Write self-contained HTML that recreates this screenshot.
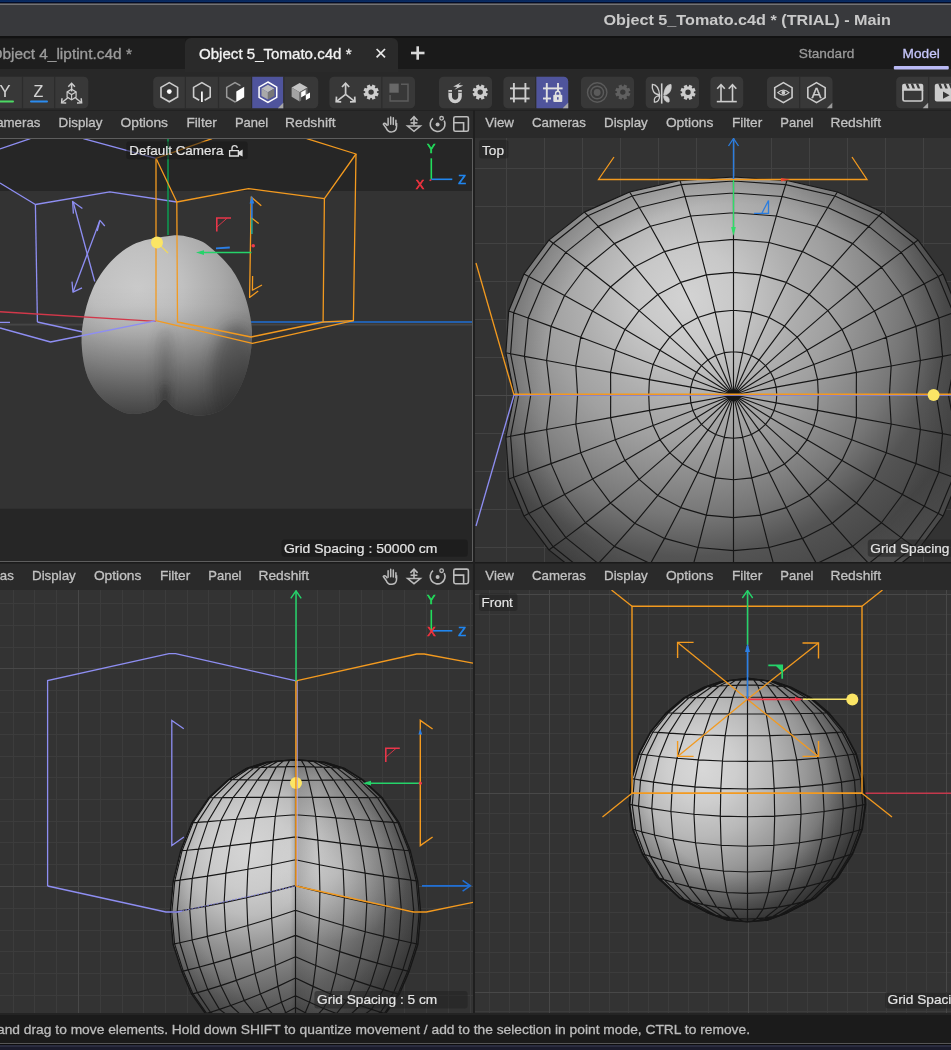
<!DOCTYPE html>
<html><head><meta charset="utf-8"><title>Object 5_Tomato.c4d * (TRIAL) - Main</title>
<style>
html,body{margin:0;padding:0;background:#1b1b1b}
body{width:951px;height:1050px;position:relative;overflow:hidden;font-family:"Liberation Sans",sans-serif}
svg{display:block;overflow:hidden;will-change:transform}
</style></head><body>
<div style="position:absolute;left:0;top:0;width:951px;height:2px;background:linear-gradient(#08265a,#0a2d64)"></div>
<div style="position:absolute;left:0;top:2px;width:951px;height:1px;background:#030c28"></div>
<div style="position:absolute;left:0;top:3px;width:951px;height:1px;background:#47474c"></div>
<div style="position:absolute;left:0;top:4px;width:951px;height:1px;background:#727275"></div>
<div style="position:absolute;left:0;top:5px;width:951px;height:31px;background:#38393c"></div>
<div style="position:absolute;left:0;top:36px;width:951px;height:34px;background:#1a1a1a"></div>
<div style="position:absolute;left:0;top:36px;width:951px;height:2px;background:#121212"></div>
<div style="position:absolute;left:0;top:39px;width:185px;height:30px;background:#1e1e1e"></div>
<div style="position:absolute;left:185px;top:38px;width:213px;height:32px;background:#2a2a2a;border-radius:6px 6px 0 0"></div>
<div style="position:absolute;left:0;top:69px;width:951px;height:41px;background:#282828"></div>
<div style="position:absolute;left:185px;top:66px;width:213px;height:6px;background:#2a2a2a"></div>
<svg style="position:absolute;left:0px;top:0px" width="951" height="70" viewBox="0 0 951 70" font-family='"Liberation Sans", sans-serif'><text x="603.5" y="24.5" font-size="15.5" fill="#c9c9c9" font-weight="bold" textLength="287.5" lengthAdjust="spacingAndGlyphs">Object 5_Tomato.c4d * (TRIAL) - Main</text><text x="-9.6" y="58.6" font-size="14" fill="#9c9c9c" stroke="#9c9c9c" stroke-width="0.3" textLength="141.5" lengthAdjust="spacingAndGlyphs">Object 4_liptint.c4d *</text><text x="199" y="58.5" font-size="14" fill="#f2f2f2" stroke="#f2f2f2" stroke-width="0.3" textLength="152.5" lengthAdjust="spacingAndGlyphs">Object 5_Tomato.c4d *</text><line x1="376.6" y1="49" x2="385" y2="57.4" stroke="#e8e8e8" stroke-width="1.7"/><line x1="385" y1="49" x2="376.6" y2="57.4" stroke="#e8e8e8" stroke-width="1.7"/><line x1="411" y1="53" x2="424.5" y2="53" stroke="#d8d8d8" stroke-width="2.6"/><line x1="417.7" y1="46.3" x2="417.7" y2="59.7" stroke="#d8d8d8" stroke-width="2.6"/><text x="798.8" y="58.2" font-size="13.5" fill="#9a9a9a" stroke="#9a9a9a" stroke-width="0.3" textLength="55.5" lengthAdjust="spacingAndGlyphs">Standard</text><text x="902.6" y="58.2" font-size="13.5" fill="#c6c6fb" stroke="#c6c6fb" stroke-width="0.3" textLength="37.2" lengthAdjust="spacingAndGlyphs">Model</text><rect x="893.8" y="66" width="55" height="3.5" fill="#b9b9f4" rx="1"/></svg>
<svg style="position:absolute;left:0px;top:70px" width="951" height="40" viewBox="0 70 951 40" font-family='"Liberation Sans", sans-serif'><rect x="-6" y="76.8" width="94.3" height="31.4" fill="#383838" rx="4.5"/><line x1="22.5" y1="76.8" x2="22.5" y2="108.2" stroke="#2c2c2c" stroke-width="1.2"/><line x1="54.6" y1="76.8" x2="54.6" y2="108.2" stroke="#2c2c2c" stroke-width="1.2"/><text x="-0.5" y="97.2" font-size="17" fill="#d4d4d4" stroke="#d4d4d4" stroke-width="0.1" textLength="11" lengthAdjust="spacingAndGlyphs">Y</text><rect x="-2" y="100.6" width="16" height="2" fill="#4cd964" rx="1"/><text x="33.6" y="97.2" font-size="17" fill="#d4d4d4" stroke="#d4d4d4" stroke-width="0.1" textLength="9.8" lengthAdjust="spacingAndGlyphs">Z</text><rect x="30" y="100.6" width="18" height="2" fill="#2b8cf0" rx="1"/><line x1="71.6" y1="91.5" x2="71.6" y2="84" stroke="#cdcdcd" stroke-width="1.5"/><path d="M68.3 86.8 L71.6 83.3 L74.9 86.8" stroke="#cdcdcd" stroke-width="1.5" fill="none"/><line x1="67.6" y1="98" x2="62" y2="102.5" stroke="#cdcdcd" stroke-width="1.5"/><path d="M62 98.3 L61.6 102.8 L66.2 102.9" stroke="#cdcdcd" stroke-width="1.5" fill="none"/><line x1="75.6" y1="98" x2="81.2" y2="102.5" stroke="#cdcdcd" stroke-width="1.5"/><path d="M81.2 98.3 L81.6 102.8 L77 102.9" stroke="#cdcdcd" stroke-width="1.5" fill="none"/><path d="M71.6 89.3 L76.1 91.9 L76.1 97.1 L71.6 99.7 L67.1 97.1 L67.1 91.9 Z" stroke="#cdcdcd" stroke-width="1.2" fill="none"/><path d="M67.1 91.9 L71.6 94.5 L76.1 91.9" stroke="#cdcdcd" stroke-width="1.1" fill="none"/><line x1="71.6" y1="94.5" x2="71.6" y2="99.7" stroke="#cdcdcd" stroke-width="1.1"/><rect x="153.2" y="76.8" width="165" height="31.4" fill="#383838" rx="4.5"/><rect x="251.9" y="76.8" width="31.6" height="31.4" fill="#4f549c"/><line x1="185.4" y1="76.8" x2="185.4" y2="108.2" stroke="#2c2c2c" stroke-width="1.2"/><line x1="218.5" y1="76.8" x2="218.5" y2="108.2" stroke="#2c2c2c" stroke-width="1.2"/><line x1="251.6" y1="76.8" x2="251.6" y2="108.2" stroke="#2c2c2c" stroke-width="1.2"/><line x1="283.8" y1="76.8" x2="283.8" y2="108.2" stroke="#2c2c2c" stroke-width="1.2"/><path d="M169.3 82.6 L177.61 87.4 L177.61 97 L169.3 101.8 L160.99 97 L160.99 87.4 Z" stroke="#cdcdcd" stroke-width="1.6" fill="none"/><circle cx="169.3" cy="91.6" r="2.4" fill="#fff"/><path d="M199.2 100.3 L193.59 97 L193.59 87.4 L201.9 82.6 L210.21 87.4 L210.21 97 L204.6 100.3" stroke="#cdcdcd" stroke-width="1.6" fill="none"/><line x1="201.9" y1="91.5" x2="201.9" y2="102" stroke="#fff" stroke-width="1.7"/><path d="M236 101.4 L235 101.8 L226.69 97 L226.69 87.4 L235 82.6 L240.5 85.6" stroke="#9a9a9a" stroke-width="1.5" fill="none"/><path d="M236.3 91.5 L244.2 86.8 L244.2 97.3 L236.3 102 Z" stroke="none" stroke-width="0" fill="#fff"/><path d="M267.9 82 L276.73 87.1 L276.73 97.3 L267.9 102.4 L259.07 97.3 L259.07 87.1 Z" stroke="#fff" stroke-width="1.5" fill="none"/><path d="M261.49 88.5 L267.9 84.8 L274.31 88.5 L267.9 92.2 Z" stroke="none" stroke-width="0" fill="#bdbdbd"/><path d="M261.49 88.5 L267.9 92.2 L267.9 99.6 L261.49 95.9 Z" stroke="none" stroke-width="0" fill="#a9a9a9"/><path d="M267.9 92.2 L274.31 88.5 L274.31 95.9 L267.9 99.6 Z" stroke="none" stroke-width="0" fill="#777"/><path d="M283.3 108.2 L277.8 108.2 L283.3 102.7 Z" fill="#a8a8a8"/><path d="M291.63 87.6 L299.6 83 L307.57 87.6 L299.6 92.2 Z" stroke="none" stroke-width="0" fill="#c4c4c4"/><path d="M291.63 87.6 L299.6 92.2 L299.6 101.4 L291.63 96.8 Z" stroke="none" stroke-width="0" fill="#a2a2a2"/><path d="M299.6 92.2 L307.57 87.6 L307.57 96.8 L299.6 101.4 Z" stroke="none" stroke-width="0" fill="#6a6a6a"/><path d="M301.2 92.2 L305.6 89.7 L305.6 95 L301.2 97.5 Z" stroke="none" stroke-width="0" fill="#fff"/><path d="M305.6 95 L310 92.5 L310 97.8 L305.6 100.3 Z" stroke="none" stroke-width="0" fill="#fff"/><path d="M301.2 97.5 L305.6 95 L305.6 100.3 L301.2 102.8 Z" stroke="none" stroke-width="0" fill="#383838"/><rect x="329.4" y="76.8" width="85.6" height="31.4" fill="#383838" rx="4.5"/><line x1="381.8" y1="76.8" x2="381.8" y2="108.2" stroke="#2c2c2c" stroke-width="1.2"/><line x1="345.6" y1="94.4" x2="345.6" y2="83.6" stroke="#cdcdcd" stroke-width="1.7"/><path d="M342 87 L345.6 83.2 L349.2 87" stroke="#cdcdcd" stroke-width="1.7" fill="none"/><line x1="345.6" y1="94.4" x2="336.6" y2="101.3" stroke="#cdcdcd" stroke-width="1.7"/><path d="M336.5 96.6 L336.2 101.6 L341.2 101.8" stroke="#cdcdcd" stroke-width="1.7" fill="none"/><line x1="345.6" y1="94.4" x2="354.6" y2="101.3" stroke="#cdcdcd" stroke-width="1.7"/><path d="M354.7 96.6 L355 101.6 L350 101.8" stroke="#cdcdcd" stroke-width="1.7" fill="none"/><line x1="374.8" y1="93.63" x2="378.12" y2="95.01" stroke="#cdcdcd" stroke-width="3.3"/><line x1="372.63" y1="95.8" x2="374.01" y2="99.12" stroke="#cdcdcd" stroke-width="3.3"/><line x1="369.57" y1="95.8" x2="368.19" y2="99.12" stroke="#cdcdcd" stroke-width="3.3"/><line x1="367.4" y1="93.63" x2="364.08" y2="95.01" stroke="#cdcdcd" stroke-width="3.3"/><line x1="367.4" y1="90.57" x2="364.08" y2="89.19" stroke="#cdcdcd" stroke-width="3.3"/><line x1="369.57" y1="88.4" x2="368.19" y2="85.08" stroke="#cdcdcd" stroke-width="3.3"/><line x1="372.63" y1="88.4" x2="374.01" y2="85.08" stroke="#cdcdcd" stroke-width="3.3"/><line x1="374.8" y1="90.57" x2="378.12" y2="89.19" stroke="#cdcdcd" stroke-width="3.3"/><circle cx="371.1" cy="92.1" r="4.3" fill="none" stroke="#cdcdcd" stroke-width="3.2"/><rect x="389.4" y="83.6" width="9.3" height="9.1" fill="#686868"/><path d="M401 84.3 L408 84.3 L408 101 L390.1 101 L390.1 95" stroke="#5c5c5c" stroke-width="1.5" fill="none"/><rect x="439" y="76.8" width="53" height="31.4" fill="#383838" rx="4.5"/><path d="M450.2 90 V96.6 A4.9 4.9 0 0 0 460 96.6 V90" stroke="#cdcdcd" stroke-width="3.6" fill="none"/><line x1="448.4" y1="92.3" x2="452" y2="92.3" stroke="#383838" stroke-width="1"/><line x1="458.2" y1="92.3" x2="461.8" y2="92.3" stroke="#383838" stroke-width="1"/><path d="M461 82.4 L453.2 86.6 L457.2 86.9 L454.4 89.8 L463.2 85.4 L458.6 85.1 Z" stroke="none" stroke-width="0" fill="#cdcdcd"/><line x1="483.9" y1="93.63" x2="487.22" y2="95.01" stroke="#cdcdcd" stroke-width="3.3"/><line x1="481.73" y1="95.8" x2="483.11" y2="99.12" stroke="#cdcdcd" stroke-width="3.3"/><line x1="478.67" y1="95.8" x2="477.29" y2="99.12" stroke="#cdcdcd" stroke-width="3.3"/><line x1="476.5" y1="93.63" x2="473.18" y2="95.01" stroke="#cdcdcd" stroke-width="3.3"/><line x1="476.5" y1="90.57" x2="473.18" y2="89.19" stroke="#cdcdcd" stroke-width="3.3"/><line x1="478.67" y1="88.4" x2="477.29" y2="85.08" stroke="#cdcdcd" stroke-width="3.3"/><line x1="481.73" y1="88.4" x2="483.11" y2="85.08" stroke="#cdcdcd" stroke-width="3.3"/><line x1="483.9" y1="90.57" x2="487.22" y2="89.19" stroke="#cdcdcd" stroke-width="3.3"/><circle cx="480.2" cy="92.1" r="4.3" fill="none" stroke="#cdcdcd" stroke-width="3.2"/><rect x="503.4" y="76.8" width="64.8" height="31.4" fill="#383838" rx="4.5"/><line x1="535.7" y1="76.8" x2="535.7" y2="108.2" stroke="#2c2c2c" stroke-width="1.2"/><path d="M536.4 76.8 H563.7 A4.5 4.5 0 0 1 568.2 81.3 V108.2 H536.4 Z" fill="#4f549c"/><line x1="513.9" y1="83" x2="513.9" y2="102.4" stroke="#cdcdcd" stroke-width="1.9"/><line x1="525.4" y1="83" x2="525.4" y2="102.4" stroke="#cdcdcd" stroke-width="1.9"/><line x1="510" y1="88.4" x2="529.6" y2="88.4" stroke="#cdcdcd" stroke-width="1.9"/><line x1="510" y1="98.5" x2="529.6" y2="98.5" stroke="#cdcdcd" stroke-width="1.9"/><line x1="546.8" y1="83" x2="546.8" y2="102.4" stroke="#e0e0e0" stroke-width="1.9"/><line x1="558" y1="83" x2="558" y2="91" stroke="#e0e0e0" stroke-width="1.9"/><line x1="543" y1="88.4" x2="562.6" y2="88.4" stroke="#e0e0e0" stroke-width="1.9"/><line x1="543" y1="98.5" x2="551" y2="98.5" stroke="#e0e0e0" stroke-width="1.9"/><rect x="553.3" y="94.8" width="9" height="7.2" fill="#e0e0e0" rx="1"/><path d="M555.6 95 V93.4 A2.2 2.2 0 0 1 560 93.4 V95" stroke="#e0e0e0" stroke-width="1.4" fill="none"/><rect x="557" y="97.2" width="1.6" height="2.4" fill="#4f549c"/><path d="M568.2 108.2 L562.7 108.2 L568.2 102.7 Z" fill="#a8a8a8"/><rect x="581" y="76.8" width="53" height="31.4" fill="#383838" rx="4.5"/><circle cx="597.2" cy="92.5" r="9.7" fill="none" stroke="#5b5b5b" stroke-width="1.4"/><circle cx="597.2" cy="92.5" r="6.3" fill="none" stroke="#5b5b5b" stroke-width="1.4"/><circle cx="597.2" cy="92.5" r="3.4" fill="#5b5b5b"/><line x1="626.5" y1="93.63" x2="629.82" y2="95.01" stroke="#606060" stroke-width="3.3"/><line x1="624.33" y1="95.8" x2="625.71" y2="99.12" stroke="#606060" stroke-width="3.3"/><line x1="621.27" y1="95.8" x2="619.89" y2="99.12" stroke="#606060" stroke-width="3.3"/><line x1="619.1" y1="93.63" x2="615.78" y2="95.01" stroke="#606060" stroke-width="3.3"/><line x1="619.1" y1="90.57" x2="615.78" y2="89.19" stroke="#606060" stroke-width="3.3"/><line x1="621.27" y1="88.4" x2="619.89" y2="85.08" stroke="#606060" stroke-width="3.3"/><line x1="624.33" y1="88.4" x2="625.71" y2="85.08" stroke="#606060" stroke-width="3.3"/><line x1="626.5" y1="90.57" x2="629.82" y2="89.19" stroke="#606060" stroke-width="3.3"/><circle cx="622.8" cy="92.1" r="4.3" fill="none" stroke="#606060" stroke-width="3.2"/><rect x="645.7" y="76.8" width="53.3" height="31.4" fill="#383838" rx="4.5"/><line x1="661.7" y1="83.4" x2="661.7" y2="103.6" stroke="#cdcdcd" stroke-width="1.6"/><path d="M659.6 95 C659 89 657 84.6 652.4 84.4 C651.4 90 654 94.6 659.6 95 Z M659.6 95.8 C656 95.8 653.4 98 654.4 102 C658 102.6 659.8 99 659.6 95.8 Z" stroke="#cdcdcd" stroke-width="1.3" fill="none"/><path d="M663.8 95 C664.4 89 666.4 84.6 671 84.4 C672 90 669.4 94.6 663.8 95 Z M663.8 95.8 C667.4 95.8 670 98 669 102 C665.4 102.6 663.6 99 663.8 95.8 Z" fill="#cdcdcd" stroke="#cdcdcd" stroke-width="0.8"/><line x1="691.7" y1="93.83" x2="695.02" y2="95.21" stroke="#cdcdcd" stroke-width="3.3"/><line x1="689.53" y1="96" x2="690.91" y2="99.32" stroke="#cdcdcd" stroke-width="3.3"/><line x1="686.47" y1="96" x2="685.09" y2="99.32" stroke="#cdcdcd" stroke-width="3.3"/><line x1="684.3" y1="93.83" x2="680.98" y2="95.21" stroke="#cdcdcd" stroke-width="3.3"/><line x1="684.3" y1="90.77" x2="680.98" y2="89.39" stroke="#cdcdcd" stroke-width="3.3"/><line x1="686.47" y1="88.6" x2="685.09" y2="85.28" stroke="#cdcdcd" stroke-width="3.3"/><line x1="689.53" y1="88.6" x2="690.91" y2="85.28" stroke="#cdcdcd" stroke-width="3.3"/><line x1="691.7" y1="90.77" x2="695.02" y2="89.39" stroke="#cdcdcd" stroke-width="3.3"/><circle cx="688" cy="92.3" r="4.3" fill="none" stroke="#cdcdcd" stroke-width="3.2"/><rect x="710.4" y="76.8" width="32.8" height="31.4" fill="#383838" rx="4.5"/><line x1="721" y1="85" x2="721" y2="101" stroke="#cdcdcd" stroke-width="1.6"/><path d="M717.2 88.8 L721 84.6 L724.8 88.8" stroke="#cdcdcd" stroke-width="1.6" fill="none"/><line x1="732.5" y1="85" x2="732.5" y2="101" stroke="#cdcdcd" stroke-width="1.6"/><path d="M728.7 88.8 L732.5 84.6 L736.3 88.8" stroke="#cdcdcd" stroke-width="1.6" fill="none"/><line x1="716.8" y1="101.6" x2="736.8" y2="101.6" stroke="#cdcdcd" stroke-width="1.6"/><rect x="767" y="76.8" width="65.5" height="31.4" fill="#383838" rx="4.5"/><line x1="799.6" y1="76.8" x2="799.6" y2="108.2" stroke="#2c2c2c" stroke-width="1.2"/><path d="M783.4 82.6 L792.06 87.6 L792.06 97.6 L783.4 102.6 L774.74 97.6 L774.74 87.6 Z" stroke="#cdcdcd" stroke-width="1.6" fill="none"/><path d="M777.8 92.6 Q783.4 87.6 789 92.6 Q783.4 97.6 777.8 92.6 Z" stroke="#cdcdcd" stroke-width="1.2" fill="none"/><circle cx="783.4" cy="92.6" r="1.9" fill="#cdcdcd"/><path d="M816.5 82.6 L825.16 87.6 L825.16 97.6 L816.5 102.6 L807.84 97.6 L807.84 87.6 Z" stroke="#cdcdcd" stroke-width="1.6" fill="none"/><text x="816.5" y="98" font-size="15" fill="#cdcdcd" stroke="#cdcdcd" stroke-width="0.3" text-anchor="middle">A</text><path d="M832.3 108.2 L826.8 108.2 L832.3 102.7 Z" fill="#9a9a9a"/><rect x="896.2" y="76.8" width="63.8" height="31.4" fill="#383838" rx="4.5"/><line x1="928.6" y1="76.8" x2="928.6" y2="108.2" stroke="#2c2c2c" stroke-width="1.2"/><path d="M903 90 V99.4 A1.6 1.6 0 0 0 904.6 101 H920.8 A1.6 1.6 0 0 0 922.4 99.4 V90" stroke="#cdcdcd" stroke-width="1.7" fill="none"/><path d="M902.1 90.8 V85.8 A2 2 0 0 1 904.1 83.8 H921.3 A2 2 0 0 1 923.3 85.8 V90.8 Z" fill="#cdcdcd"/><path d="M905.4 83.6 L907.8 83.6 L909.8 88.6 L907.4 88.6 Z" stroke="none" stroke-width="0" fill="#383838"/><path d="M910.6 83.6 L913 83.6 L915 88.6 L912.6 88.6 Z" stroke="none" stroke-width="0" fill="#383838"/><path d="M915.8 83.6 L918.2 83.6 L920.2 88.6 L917.8 88.6 Z" stroke="none" stroke-width="0" fill="#383838"/><path d="M928.2 108.2 L922.7 108.2 L928.2 102.7 Z" fill="#a8a8a8"/><path d="M934.8 85.8 A2 2 0 0 1 936.8 83.8 H960 V101.6 H936.8 A2 2 0 0 1 934.8 99.6 Z" fill="#cdcdcd"/><path d="M938.2 83.6 L940.6 83.6 L942.6 88.6 L940.2 88.6 Z" stroke="none" stroke-width="0" fill="#383838"/><path d="M943.4 83.6 L945.8 83.6 L947.8 88.6 L945.4 88.6 Z" stroke="none" stroke-width="0" fill="#383838"/><path d="M948.6 83.6 L951 83.6 L953 88.6 L950.6 88.6 Z" stroke="none" stroke-width="0" fill="#383838"/><path d="M943 91.6 L943 98.8 L949.6 95.2 Z" stroke="none" stroke-width="0" fill="#383838"/></svg>
<div style="position:absolute;left:0;top:110px;width:951px;height:28px;background:#2a2a2a"></div>
<div style="position:absolute;left:0;top:110px;width:951px;height:1px;background:#222"></div>
<div style="position:absolute;left:473px;top:110px;width:2px;height:28px;background:#1f1f1f"></div>
<svg style="position:absolute;left:0px;top:110px" width="951" height="28" viewBox="0 110 951 28" font-family='"Liberation Sans", sans-serif'><text x="485.3" y="127.3" font-size="13.5" fill="#c2c2c2" stroke="#c2c2c2" stroke-width="0.3" textLength="28.6" lengthAdjust="spacingAndGlyphs">View</text><text x="532" y="127.3" font-size="13.5" fill="#c2c2c2" stroke="#c2c2c2" stroke-width="0.3" textLength="53.8" lengthAdjust="spacingAndGlyphs">Cameras</text><text x="-13.4" y="127.3" font-size="13.5" fill="#c2c2c2" stroke="#c2c2c2" stroke-width="0.3" textLength="53.8" lengthAdjust="spacingAndGlyphs">Cameras</text><text x="604" y="127.3" font-size="13.5" fill="#c2c2c2" stroke="#c2c2c2" stroke-width="0.3" textLength="43.8" lengthAdjust="spacingAndGlyphs">Display</text><text x="58.6" y="127.3" font-size="13.5" fill="#c2c2c2" stroke="#c2c2c2" stroke-width="0.3" textLength="43.8" lengthAdjust="spacingAndGlyphs">Display</text><text x="665.9" y="127.3" font-size="13.5" fill="#c2c2c2" stroke="#c2c2c2" stroke-width="0.3" textLength="47.5" lengthAdjust="spacingAndGlyphs">Options</text><text x="120.5" y="127.3" font-size="13.5" fill="#c2c2c2" stroke="#c2c2c2" stroke-width="0.3" textLength="47.5" lengthAdjust="spacingAndGlyphs">Options</text><text x="731.9" y="127.3" font-size="13.5" fill="#c2c2c2" stroke="#c2c2c2" stroke-width="0.3" textLength="30.3" lengthAdjust="spacingAndGlyphs">Filter</text><text x="186.5" y="127.3" font-size="13.5" fill="#c2c2c2" stroke="#c2c2c2" stroke-width="0.3" textLength="30.3" lengthAdjust="spacingAndGlyphs">Filter</text><text x="780.3" y="127.3" font-size="13.5" fill="#c2c2c2" stroke="#c2c2c2" stroke-width="0.3" textLength="33.2" lengthAdjust="spacingAndGlyphs">Panel</text><text x="234.9" y="127.3" font-size="13.5" fill="#c2c2c2" stroke="#c2c2c2" stroke-width="0.3" textLength="33.2" lengthAdjust="spacingAndGlyphs">Panel</text><text x="830.5" y="127.3" font-size="13.5" fill="#c2c2c2" stroke="#c2c2c2" stroke-width="0.3" textLength="50.5" lengthAdjust="spacingAndGlyphs">Redshift</text><text x="285.1" y="127.3" font-size="13.5" fill="#c2c2c2" stroke="#c2c2c2" stroke-width="0.3" textLength="50.5" lengthAdjust="spacingAndGlyphs">Redshift</text><path d="M388.1 124.9 V118.3 M390.7 124.3 V116.9 M393.3 124.5 V117.7 M395.9 125.3 V120.3" stroke="#bcbcbc" stroke-width="1.5" fill="none" stroke-linecap="round"/><path d="M396.6 122.9 V126.3 C396.6 133.3 388.1 133.5 386.3 128.3 L383.3 124.1 C384.3 122.5 386.1 123.5 387.4 125.9" stroke="#bcbcbc" stroke-width="1.5" fill="none" stroke-linejoin="round"/><line x1="414" y1="117.3" x2="414" y2="125.5" stroke="#bcbcbc" stroke-width="1.6"/><path d="M410.4 120.5 L414 116.7 L417.6 120.5" stroke="#bcbcbc" stroke-width="1.6" fill="none"/><line x1="410.6" y1="122.9" x2="417.4" y2="122.9" stroke="#bcbcbc" stroke-width="1.6"/><path d="M407.6 126.1 L420.4 126.1 L414 131.3 Z" stroke="#bcbcbc" stroke-width="1.5" fill="none"/><path d="M433 118.3 A7.4 7.4 0 1 0 444.2 120.7" stroke="#bcbcbc" stroke-width="1.6" fill="none"/><circle cx="441.6" cy="118.3" r="1.8" fill="none" stroke="#bcbcbc" stroke-width="1.3"/><circle cx="437.6" cy="124.5" r="2" fill="#bcbcbc"/><rect x="453.8" y="116.7" width="14.6" height="14.6" rx="1.6" fill="none" stroke="#bcbcbc" stroke-width="1.6"/><path d="M453.8 122.7 L463.6 122.7 L463.6 131.3" stroke="#bcbcbc" stroke-width="1.6" fill="none"/></svg>
<div style="position:absolute;left:0;top:563px;width:951px;height:27px;background:#2a2a2a"></div>
<div style="position:absolute;left:0;top:563px;width:951px;height:1px;background:#222"></div>
<div style="position:absolute;left:473px;top:563px;width:2px;height:27px;background:#1f1f1f"></div>
<svg style="position:absolute;left:0px;top:563px" width="951" height="27" viewBox="0 563 951 27" font-family='"Liberation Sans", sans-serif'><text x="485.3" y="579.9" font-size="13.5" fill="#c2c2c2" stroke="#c2c2c2" stroke-width="0.3" textLength="28.6" lengthAdjust="spacingAndGlyphs">View</text><text x="532" y="579.9" font-size="13.5" fill="#c2c2c2" stroke="#c2c2c2" stroke-width="0.3" textLength="53.8" lengthAdjust="spacingAndGlyphs">Cameras</text><text x="-40" y="579.9" font-size="13.5" fill="#c2c2c2" stroke="#c2c2c2" stroke-width="0.3" textLength="53.8" lengthAdjust="spacingAndGlyphs">Cameras</text><text x="604" y="579.9" font-size="13.5" fill="#c2c2c2" stroke="#c2c2c2" stroke-width="0.3" textLength="43.8" lengthAdjust="spacingAndGlyphs">Display</text><text x="32" y="579.9" font-size="13.5" fill="#c2c2c2" stroke="#c2c2c2" stroke-width="0.3" textLength="43.8" lengthAdjust="spacingAndGlyphs">Display</text><text x="665.9" y="579.9" font-size="13.5" fill="#c2c2c2" stroke="#c2c2c2" stroke-width="0.3" textLength="47.5" lengthAdjust="spacingAndGlyphs">Options</text><text x="93.9" y="579.9" font-size="13.5" fill="#c2c2c2" stroke="#c2c2c2" stroke-width="0.3" textLength="47.5" lengthAdjust="spacingAndGlyphs">Options</text><text x="731.9" y="579.9" font-size="13.5" fill="#c2c2c2" stroke="#c2c2c2" stroke-width="0.3" textLength="30.3" lengthAdjust="spacingAndGlyphs">Filter</text><text x="159.9" y="579.9" font-size="13.5" fill="#c2c2c2" stroke="#c2c2c2" stroke-width="0.3" textLength="30.3" lengthAdjust="spacingAndGlyphs">Filter</text><text x="780.3" y="579.9" font-size="13.5" fill="#c2c2c2" stroke="#c2c2c2" stroke-width="0.3" textLength="33.2" lengthAdjust="spacingAndGlyphs">Panel</text><text x="208.3" y="579.9" font-size="13.5" fill="#c2c2c2" stroke="#c2c2c2" stroke-width="0.3" textLength="33.2" lengthAdjust="spacingAndGlyphs">Panel</text><text x="830.5" y="579.9" font-size="13.5" fill="#c2c2c2" stroke="#c2c2c2" stroke-width="0.3" textLength="50.5" lengthAdjust="spacingAndGlyphs">Redshift</text><text x="258.5" y="579.9" font-size="13.5" fill="#c2c2c2" stroke="#c2c2c2" stroke-width="0.3" textLength="50.5" lengthAdjust="spacingAndGlyphs">Redshift</text><path d="M388.1 577.3 V570.7 M390.7 576.7 V569.3 M393.3 576.9 V570.1 M395.9 577.7 V572.7" stroke="#bcbcbc" stroke-width="1.5" fill="none" stroke-linecap="round"/><path d="M396.6 575.3 V578.7 C396.6 585.7 388.1 585.9 386.3 580.7 L383.3 576.5 C384.3 574.9 386.1 575.9 387.4 578.3" stroke="#bcbcbc" stroke-width="1.5" fill="none" stroke-linejoin="round"/><line x1="414" y1="569.7" x2="414" y2="577.9" stroke="#bcbcbc" stroke-width="1.6"/><path d="M410.4 572.9 L414 569.1 L417.6 572.9" stroke="#bcbcbc" stroke-width="1.6" fill="none"/><line x1="410.6" y1="575.3" x2="417.4" y2="575.3" stroke="#bcbcbc" stroke-width="1.6"/><path d="M407.6 578.5 L420.4 578.5 L414 583.7 Z" stroke="#bcbcbc" stroke-width="1.5" fill="none"/><path d="M433 570.7 A7.4 7.4 0 1 0 444.2 573.1" stroke="#bcbcbc" stroke-width="1.6" fill="none"/><circle cx="441.6" cy="570.7" r="1.8" fill="none" stroke="#bcbcbc" stroke-width="1.3"/><circle cx="437.6" cy="576.9" r="2" fill="#bcbcbc"/><rect x="453.8" y="569.1" width="14.6" height="14.6" rx="1.6" fill="none" stroke="#bcbcbc" stroke-width="1.6"/><path d="M453.8 575.1 L463.6 575.1 L463.6 583.7" stroke="#bcbcbc" stroke-width="1.6" fill="none"/></svg>
<div style="position:absolute;left:473px;top:138px;width:2px;height:875px;background:#1f1f1f"></div>
<div style="position:absolute;left:0px;top:138px;width:473px;height:424px;background:#333333"></div><svg style="position:absolute;left:0px;top:138px" width="473" height="424" viewBox="0 138 473 424" font-family='"Liberation Sans", sans-serif'><defs><clipPath id="pbc"><path d="M171 235.7 C179.87 234.73 183.33 235.68 189.5 237.3 C195.67 238.92 201.05 240.18 208 245.4 C214.95 250.62 225.03 260.12 231.2 268.6 C237.37 277.08 241.53 285.9 245 296.3 C248.47 306.7 251.42 319.82 252 331 C252.58 342.18 250.82 353.37 248.5 363.4 C246.18 373.43 242.53 383.48 238.1 391.2 C233.67 398.92 228.45 405.65 221.9 409.7 C215.35 413.75 206.45 415.55 198.8 415.5 C191.15 415.45 181.67 412.05 176 409.4 C170.33 406.75 168.3 399.73 164.8 399.6 C161.3 399.47 159.13 406.3 155 408.6 C150.87 410.9 145.42 412.83 140 413.4 C134.58 413.97 128.9 414.55 122.5 412 C116.1 409.45 107.38 403.88 101.6 398.1 C95.82 392.32 91.07 385.4 87.8 377.3 C84.53 369.2 82.78 358.75 82 349.5 C81.22 340.25 81.37 331.82 83.1 321.8 C84.83 311.78 87.77 299.43 92.4 289.4 C97.03 279.37 103.58 269.32 110.9 261.6 C118.22 253.88 126.28 247.42 136.3 243.1 C146.32 238.78 162.13 236.67 171 235.7 Z"/></clipPath><radialGradient id="pbg" gradientUnits="userSpaceOnUse" cx="138" cy="290" r="150"><stop offset="0" stop-color="#cacaca"/><stop offset="0.3" stop-color="#c0c0c0"/><stop offset="0.55" stop-color="#aaaaaa"/><stop offset="0.8" stop-color="#8c8c8c"/><stop offset="1" stop-color="#6e6e6e"/></radialGradient><linearGradient id="pbv" gradientUnits="userSpaceOnUse" x1="0" y1="285" x2="0" y2="418"><stop offset="0" stop-color="#000" stop-opacity="0"/><stop offset="0.15" stop-color="#000" stop-opacity="0.02"/><stop offset="0.32" stop-color="#000" stop-opacity="0.09"/><stop offset="0.55" stop-color="#000" stop-opacity="0.24"/><stop offset="1" stop-color="#000" stop-opacity="0.52"/></linearGradient><filter id="pbl" filterUnits="userSpaceOnUse" x="0" y="138" width="473" height="424"><feGaussianBlur stdDeviation="7"/></filter><filter id="pbl2" filterUnits="userSpaceOnUse" x="0" y="138" width="473" height="424"><feGaussianBlur stdDeviation="3.5"/></filter></defs><rect x="0" y="139" width="472" height="52" fill="#262626"/><rect x="0" y="508.8" width="472" height="53" fill="#262626"/><rect x="0" y="323.6" width="472" height="2" fill="#454545"/><line x1="251" y1="322" x2="472" y2="322" stroke="#1f6fd6" stroke-width="1.5"/><path d="M30.3 138.6 L0 149" stroke="#8e8ef2" stroke-width="1.3" fill="none" stroke-linejoin="round"/><path d="M83.3 138.6 L156 158.3" stroke="#8e8ef2" stroke-width="1.3" fill="none" stroke-linejoin="round"/><path d="M0 183 L35.4 204.5 L109.8 191.9 L176.8 202" stroke="#8e8ef2" stroke-width="1.3" fill="none" stroke-linejoin="round"/><path d="M35.4 204.5 L37.4 322" stroke="#8e8ef2" stroke-width="1.3" fill="none" stroke-linejoin="round"/><path d="M0 322.4 L10 322.4" stroke="#8e8ef2" stroke-width="1.3" fill="none" stroke-linejoin="round"/><path d="M37.4 322 L83 332" stroke="#8e8ef2" stroke-width="1.3" fill="none" stroke-linejoin="round"/><path d="M73.2 202 L94.7 281.5" stroke="#8e8ef2" stroke-width="1.3" fill="none" stroke-linejoin="round"/><path d="M82.4 208.6 L72.6 201.4 L73.4 213.6" stroke="#8e8ef2" stroke-width="1.3" fill="none" stroke-linejoin="round"/><path d="M99.7 221 L73.2 291.6" stroke="#8e8ef2" stroke-width="1.3" fill="none" stroke-linejoin="round"/><path d="M104.8 226 L99.9 220.4 L97.2 231" stroke="#8e8ef2" stroke-width="1.3" fill="none" stroke-linejoin="round"/><path d="M72 281.6 L73 292.2 L82 287.8" stroke="#8e8ef2" stroke-width="1.3" fill="none" stroke-linejoin="round"/><line x1="168" y1="138.5" x2="168" y2="235" stroke="#0c9c52" stroke-width="1.5"/><path d="M171 235.7 C179.87 234.73 183.33 235.68 189.5 237.3 C195.67 238.92 201.05 240.18 208 245.4 C214.95 250.62 225.03 260.12 231.2 268.6 C237.37 277.08 241.53 285.9 245 296.3 C248.47 306.7 251.42 319.82 252 331 C252.58 342.18 250.82 353.37 248.5 363.4 C246.18 373.43 242.53 383.48 238.1 391.2 C233.67 398.92 228.45 405.65 221.9 409.7 C215.35 413.75 206.45 415.55 198.8 415.5 C191.15 415.45 181.67 412.05 176 409.4 C170.33 406.75 168.3 399.73 164.8 399.6 C161.3 399.47 159.13 406.3 155 408.6 C150.87 410.9 145.42 412.83 140 413.4 C134.58 413.97 128.9 414.55 122.5 412 C116.1 409.45 107.38 403.88 101.6 398.1 C95.82 392.32 91.07 385.4 87.8 377.3 C84.53 369.2 82.78 358.75 82 349.5 C81.22 340.25 81.37 331.82 83.1 321.8 C84.83 311.78 87.77 299.43 92.4 289.4 C97.03 279.37 103.58 269.32 110.9 261.6 C118.22 253.88 126.28 247.42 136.3 243.1 C146.32 238.78 162.13 236.67 171 235.7 Z" fill="url(#pbg)"/><g clip-path="url(#pbc)"><rect x="70" y="230" width="200" height="200" fill="url(#pbv)"/><ellipse cx="165.2" cy="372" rx="5" ry="46" fill="#2c2c2c" filter="url(#pbl)" opacity="0.36"/><ellipse cx="165" cy="400" rx="3.4" ry="16" fill="#2a2a2a" filter="url(#pbl2)" opacity="0.6"/><ellipse cx="236" cy="380" rx="24" ry="56" fill="#2c2c2c" filter="url(#pbl)" opacity="0.4"/></g><line x1="0" y1="311.8" x2="156" y2="321.4" stroke="#d2384a" stroke-width="1.4"/><path d="M0 328 L50.5 342 L156.6 320.7" stroke="#8e8ef2" stroke-width="1.3" fill="none" stroke-linejoin="round"/><path d="M212 138.6 L156 158.3 L176.8 202 L236 190.8 L248.6 188.6 L324.4 198.7 L356 154 L306.7 138.6" stroke="#f39a1f" stroke-width="1.3" fill="none" stroke-linejoin="round"/><path d="M156 158.3 L156 320.7 L252.4 343.4 L353.4 320.7 L356 154" stroke="#f39a1f" stroke-width="1.3" fill="none" stroke-linejoin="round"/><path d="M176.8 202 L177.5 322 L251 337 L323.1 322 L324.4 198.7" stroke="#f39a1f" stroke-width="1.3" fill="none" stroke-linejoin="round"/><path d="M323.1 322 L353.4 320.7" stroke="#f39a1f" stroke-width="1.3" fill="none" stroke-linejoin="round"/><path d="M261.3 205.8 L251.2 197 L249.6 297.4 L258.2 291" stroke="#f39a1f" stroke-width="1.3" fill="none" stroke-linejoin="round"/><path d="M251 217.6 L258.7 223.6" stroke="#f39a1f" stroke-width="1.3" fill="none" stroke-linejoin="round"/><path d="M252.6 276 L252.4 290.2 L262 285" stroke="#f39a1f" stroke-width="1.3" fill="none" stroke-linejoin="round"/><line x1="251.9" y1="200" x2="251.9" y2="218" stroke="#2b7fe6" stroke-width="1.6"/><line x1="251.9" y1="218" x2="251.9" y2="234" stroke="#21b0a0" stroke-width="1.4"/><path d="M249.6 203.4 L251.9 195.6 L254.2 203.4 Z" stroke="none" stroke-width="0" fill="#2b7fe6"/><circle cx="253.2" cy="245.7" r="1.8" fill="#f03a4a"/><line x1="200" y1="252.6" x2="251.4" y2="252.6" stroke="#25d36a" stroke-width="1.5"/><path d="M204 250.3 L196 252.6 L204 254.9 Z" stroke="none" stroke-width="0" fill="#25d36a"/><path d="M216.8 231.4 L216.8 218 L231 218" stroke="#e8364a" stroke-width="1.6" fill="none"/><path d="M217 227 L227 218.2" stroke="#e8364a" stroke-width="0.9" fill="none"/><line x1="216" y1="248.3" x2="229.8" y2="247.5" stroke="#2b7fe6" stroke-width="1.8"/><line x1="157" y1="242.4" x2="168" y2="253" stroke="#f2d85c" stroke-width="1.2"/><circle cx="157" cy="242.4" r="6" fill="#fbe565"/><rect x="126.3" y="141.4" width="121.4" height="17.8" fill="#181818" rx="3" fill-opacity="0.55"/><text x="129.3" y="155.3" font-size="13.5" fill="#e4e4e4" stroke="#e4e4e4" stroke-width="0.2" textLength="94.2" lengthAdjust="spacingAndGlyphs">Default Camera</text><path d="M229.6 156 V150.6 H238.4 V156 Z M232 150.6 V148 A2.6 2.4 0 0 1 237.2 148" stroke="#dcdcdc" stroke-width="1.3" fill="none"/><path d="M238.4 152 L242.6 149.4 V156.6 L238.4 154.4 Z" fill="#dcdcdc"/><line x1="431.3" y1="158.3" x2="431.3" y2="179.3" stroke="#22dd5c" stroke-width="1.6"/><line x1="431.3" y1="179.3" x2="452.3" y2="179.3" stroke="#2186ee" stroke-width="1.6"/><text x="431.3" y="152.7" font-size="12.6" fill="#22dd5c" stroke="#22dd5c" stroke-width="0.6" text-anchor="middle">Y</text><text x="462.1" y="184.3" font-size="12.6" fill="#2186ee" stroke="#2186ee" stroke-width="0.6" text-anchor="middle">Z</text><text x="420" y="189.3" font-size="12.6" fill="#f2333f" stroke="#f2333f" stroke-width="0.6" text-anchor="middle">X</text><line x1="431.3" y1="179.6" x2="429.6" y2="180.6" stroke="#f03a4a" stroke-width="1.5"/><rect x="281.5" y="539.6" width="186.3" height="17.2" fill="#1b1b1b" rx="3" fill-opacity="0.8"/><text x="284" y="553" font-size="13.5" fill="#e4e4e4" stroke="#e4e4e4" stroke-width="0.2" textLength="153.4" lengthAdjust="spacingAndGlyphs">Grid Spacing : 50000 cm</text><path d="M0 138.5 H472.5 V561.5 H0" stroke="#5e5e5e" stroke-width="1" fill="none"/></svg>
<div style="position:absolute;left:475px;top:138px;width:476px;height:424px;background:#333333"></div><svg style="position:absolute;left:475px;top:138px" width="476" height="424" viewBox="475 138 476 424" font-family='"Liberation Sans", sans-serif'><defs><clipPath id="topclip"><path id="topout" d="M952.5 395 L961.12 352.81 L958.3 310.95 L943.08 274 L918.12 240.09 L882.66 212.11 L837.36 192.03 L786.96 180.56 L733.5 177 L680.04 180.56 L629.64 192.03 L584.34 212.11 L548.88 240.09 L523.92 274 L508.7 310.95 L505.88 352.81 L514.5 395 L505.88 437.19 L508.7 479.05 L523.92 516 L548.88 549.91 L584.34 577.89 L629.64 597.97 L680.04 609.44 L733.5 613 L786.96 609.44 L837.36 597.97 L882.66 577.89 L918.12 549.91 L943.08 516 L958.3 479.05 L961.12 437.19 Z"/></clipPath><radialGradient id="topg" gradientUnits="userSpaceOnUse" cx="688" cy="298" r="340"><stop offset="0" stop-color="#d3d3d3"/><stop offset="0.15" stop-color="#c8c8c8"/><stop offset="0.31" stop-color="#aeaeae"/><stop offset="0.42" stop-color="#a0a0a0"/><stop offset="0.56" stop-color="#868686"/><stop offset="0.64" stop-color="#767676"/><stop offset="0.76" stop-color="#545454"/><stop offset="0.88" stop-color="#484848"/><stop offset="1" stop-color="#5c5c5c"/></radialGradient><radialGradient id="topr" gradientUnits="userSpaceOnUse" cx="733" cy="395" r="245"><stop offset="0.78" stop-color="#000" stop-opacity="0"/><stop offset="1" stop-color="#000" stop-opacity="0.2"/></radialGradient></defs><path d="M506.5 138V562M544.5 138V562M582.5 138V562M620.5 138V562M658.5 138V562M696.5 138V562M771.5 138V562M809.5 138V562M847.5 138V562M885.5 138V562M923.5 138V562M475 168.5H951M475 206.5H951M475 243.5H951M475 281.5H951M475 319.5H951M475 357.5H951M475 433.5H951M475 471.5H951M475 509.5H951M475 547.5H951" stroke="#424242" stroke-width="1" fill="none"/><path d="M734.5 138V562M475 395.5H951" stroke="#4a4a4a" stroke-width="1" fill="none"/><path d="M952.5 395 L961.12 352.81 L958.3 310.95 L943.08 274 L918.12 240.09 L882.66 212.11 L837.36 192.03 L786.96 180.56 L733.5 177 L680.04 180.56 L629.64 192.03 L584.34 212.11 L548.88 240.09 L523.92 274 L508.7 310.95 L505.88 352.81 L514.5 395 L505.88 437.19 L508.7 479.05 L523.92 516 L548.88 549.91 L584.34 577.89 L629.64 597.97 L680.04 609.44 L733.5 613 L786.96 609.44 L837.36 597.97 L882.66 577.89 L918.12 549.91 L943.08 516 L958.3 479.05 L961.12 437.19 Z" fill="url(#topg)"/><path d="M952.5 395 L961.12 352.81 L958.3 310.95 L943.08 274 L918.12 240.09 L882.66 212.11 L837.36 192.03 L786.96 180.56 L733.5 177 L680.04 180.56 L629.64 192.03 L584.34 212.11 L548.88 240.09 L523.92 274 L508.7 310.95 L505.88 352.81 L514.5 395 L505.88 437.19 L508.7 479.05 L523.92 516 L548.88 549.91 L584.34 577.89 L629.64 597.97 L680.04 609.44 L733.5 613 L786.96 609.44 L837.36 597.97 L882.66 577.89 L918.12 549.91 L943.08 516 L958.3 479.05 L961.12 437.19 Z" fill="url(#topr)"/><path d="M776.79 395 L776.17 387.19 L774.1 379.54 L770.55 372.28 L765.53 365.64 L759.09 359.93 L751.37 355.5 L742.7 352.69 L733.5 351.72 L724.3 352.69 L715.63 355.5 L707.91 359.93 L701.47 365.64 L696.45 372.28 L692.9 379.54 L690.83 387.19 L690.21 395 L690.83 402.81 L692.9 410.46 L696.45 417.72 L701.47 424.36 L707.91 430.07 L715.63 434.5 L724.3 437.31 L733.5 438.28 L742.7 437.31 L751.37 434.5 L759.09 430.07 L765.53 424.36 L770.55 417.72 L774.1 410.46 L776.17 402.81 ZM818.29 395 L817.59 379.58 L813.86 364.46 L807.01 350.22 L797.19 337.18 L784.45 326.04 L769.08 317.49 L751.82 312.1 L733.5 310.27 L715.18 312.1 L697.92 317.49 L682.55 326.04 L669.81 337.18 L659.99 350.22 L653.14 364.46 L649.41 379.58 L648.71 395 L649.41 410.42 L653.14 425.54 L659.99 439.78 L669.81 452.82 L682.55 463.96 L697.92 472.51 L715.18 477.9 L733.5 479.73 L751.82 477.9 L769.08 472.51 L784.45 463.96 L797.19 452.82 L807.01 439.78 L813.86 425.54 L817.59 410.42 ZM856.32 395 L856.41 372.42 L851.72 350.21 L842.05 329.54 L827.86 310.61 L809.14 294.56 L786.3 282.4 L760.69 274.87 L733.5 272.35 L706.31 274.87 L680.7 282.4 L657.86 294.56 L639.14 310.61 L624.95 329.54 L615.28 350.21 L610.59 372.42 L610.68 395 L610.59 417.58 L615.28 439.79 L624.95 460.46 L639.14 479.39 L657.86 495.44 L680.7 507.6 L706.31 515.13 L733.5 517.65 L760.69 515.13 L786.3 507.6 L809.14 495.44 L827.86 479.39 L842.05 460.46 L851.72 439.79 L856.41 417.58 ZM889.42 395 L891.18 365.96 L886.32 337.32 L874.43 311.02 L856.47 286.95 L832.29 266.7 L802.42 251.6 L769 242.45 L733.5 239.44 L698 242.45 L664.58 251.6 L634.71 266.7 L610.53 286.95 L592.57 311.02 L580.68 337.32 L575.82 365.96 L577.58 395 L575.82 424.04 L580.68 452.68 L592.57 478.98 L610.53 503.05 L634.71 523.3 L664.58 538.4 L698 547.55 L733.5 550.56 L769 547.55 L802.42 538.4 L832.29 523.3 L856.47 503.05 L874.43 478.98 L886.32 452.68 L891.18 424.04 ZM916.36 395 L920.39 360.5 L915.96 326.38 L902.47 295.52 L881.48 267.23 L852.65 243.64 L816.57 226.31 L776.28 216.03 L733.5 212.71 L690.72 216.03 L650.43 226.31 L614.35 243.64 L585.52 267.23 L564.53 295.52 L551.04 326.38 L546.61 360.5 L550.64 395 L546.61 429.5 L551.04 463.62 L564.53 494.48 L585.52 522.77 L614.35 546.36 L650.43 563.69 L690.72 573.97 L733.5 577.29 L776.28 573.97 L816.57 563.69 L852.65 546.36 L881.48 522.77 L902.47 494.48 L915.96 463.62 L920.39 429.5 ZM936.24 395 L942.55 356.33 L938.84 318.01 L924.33 283.79 L901.15 252.41 L868.73 226.39 L827.72 207.51 L782.02 196.53 L733.5 193.05 L684.98 196.53 L639.28 207.51 L598.27 226.39 L565.85 252.41 L542.67 283.79 L528.16 318.01 L524.45 356.33 L530.76 395 L524.45 433.67 L528.16 471.99 L542.67 506.21 L565.85 537.59 L598.27 563.61 L639.28 582.49 L684.98 593.47 L733.5 596.95 L782.02 593.47 L827.72 582.49 L868.73 563.61 L901.15 537.59 L924.33 506.21 L938.84 471.99 L942.55 433.67 ZM948.4 395 L956.4 353.71 L953.33 312.75 L938.28 276.48 L913.76 243.21 L879.08 215.72 L834.89 195.94 L785.69 184.59 L733.5 181.04 L681.31 184.59 L632.11 195.94 L587.92 215.72 L553.24 243.21 L528.72 276.48 L513.67 312.75 L510.6 353.71 L518.6 395 L510.6 436.29 L513.67 477.25 L528.72 513.52 L553.24 546.79 L587.92 574.28 L632.11 594.06 L681.31 605.41 L733.5 608.96 L785.69 605.41 L834.89 594.06 L879.08 574.28 L913.76 546.79 L938.28 513.52 L953.33 477.25 L956.4 436.29 ZM952.5 395 L961.12 352.81 L958.3 310.95 L943.08 274 L918.12 240.09 L882.66 212.11 L837.36 192.03 L786.96 180.56 L733.5 177 L680.04 180.56 L629.64 192.03 L584.34 212.11 L548.88 240.09 L523.92 274 L508.7 310.95 L505.88 352.81 L514.5 395 L505.88 437.19 L508.7 479.05 L523.92 516 L548.88 549.91 L584.34 577.89 L629.64 597.97 L680.04 609.44 L733.5 613 L786.96 609.44 L837.36 597.97 L882.66 577.89 L918.12 549.91 L943.08 516 L958.3 479.05 L961.12 437.19 ZM733.5 395 L776.79 395 L818.29 395 L856.32 395 L889.42 395 L916.36 395 L936.24 395 L948.4 395 L952.5 395M733.5 395 L776.17 387.19 L817.59 379.58 L856.41 372.42 L891.18 365.96 L920.39 360.5 L942.55 356.33 L956.4 353.71 L961.12 352.81M733.5 395 L774.1 379.54 L813.86 364.46 L851.72 350.21 L886.32 337.32 L915.96 326.38 L938.84 318.01 L953.33 312.75 L958.3 310.95M733.5 395 L770.55 372.28 L807.01 350.22 L842.05 329.54 L874.43 311.02 L902.47 295.52 L924.33 283.79 L938.28 276.48 L943.08 274M733.5 395 L765.53 365.64 L797.19 337.18 L827.86 310.61 L856.47 286.95 L881.48 267.23 L901.15 252.41 L913.76 243.21 L918.12 240.09M733.5 395 L759.09 359.93 L784.45 326.04 L809.14 294.56 L832.29 266.7 L852.65 243.64 L868.73 226.39 L879.08 215.72 L882.66 212.11M733.5 395 L751.37 355.5 L769.08 317.49 L786.3 282.4 L802.42 251.6 L816.57 226.31 L827.72 207.51 L834.89 195.94 L837.36 192.03M733.5 395 L742.7 352.69 L751.82 312.1 L760.69 274.87 L769 242.45 L776.28 216.03 L782.02 196.53 L785.69 184.59 L786.96 180.56M733.5 395 L733.5 351.72 L733.5 310.27 L733.5 272.35 L733.5 239.44 L733.5 212.71 L733.5 193.05 L733.5 181.04 L733.5 177M733.5 395 L724.3 352.69 L715.18 312.1 L706.31 274.87 L698 242.45 L690.72 216.03 L684.98 196.53 L681.31 184.59 L680.04 180.56M733.5 395 L715.63 355.5 L697.92 317.49 L680.7 282.4 L664.58 251.6 L650.43 226.31 L639.28 207.51 L632.11 195.94 L629.64 192.03M733.5 395 L707.91 359.93 L682.55 326.04 L657.86 294.56 L634.71 266.7 L614.35 243.64 L598.27 226.39 L587.92 215.72 L584.34 212.11M733.5 395 L701.47 365.64 L669.81 337.18 L639.14 310.61 L610.53 286.95 L585.52 267.23 L565.85 252.41 L553.24 243.21 L548.88 240.09M733.5 395 L696.45 372.28 L659.99 350.22 L624.95 329.54 L592.57 311.02 L564.53 295.52 L542.67 283.79 L528.72 276.48 L523.92 274M733.5 395 L692.9 379.54 L653.14 364.46 L615.28 350.21 L580.68 337.32 L551.04 326.38 L528.16 318.01 L513.67 312.75 L508.7 310.95M733.5 395 L690.83 387.19 L649.41 379.58 L610.59 372.42 L575.82 365.96 L546.61 360.5 L524.45 356.33 L510.6 353.71 L505.88 352.81M733.5 395 L690.21 395 L648.71 395 L610.68 395 L577.58 395 L550.64 395 L530.76 395 L518.6 395 L514.5 395M733.5 395 L690.83 402.81 L649.41 410.42 L610.59 417.58 L575.82 424.04 L546.61 429.5 L524.45 433.67 L510.6 436.29 L505.88 437.19M733.5 395 L692.9 410.46 L653.14 425.54 L615.28 439.79 L580.68 452.68 L551.04 463.62 L528.16 471.99 L513.67 477.25 L508.7 479.05M733.5 395 L696.45 417.72 L659.99 439.78 L624.95 460.46 L592.57 478.98 L564.53 494.48 L542.67 506.21 L528.72 513.52 L523.92 516M733.5 395 L701.47 424.36 L669.81 452.82 L639.14 479.39 L610.53 503.05 L585.52 522.77 L565.85 537.59 L553.24 546.79 L548.88 549.91M733.5 395 L707.91 430.07 L682.55 463.96 L657.86 495.44 L634.71 523.3 L614.35 546.36 L598.27 563.61 L587.92 574.28 L584.34 577.89M733.5 395 L715.63 434.5 L697.92 472.51 L680.7 507.6 L664.58 538.4 L650.43 563.69 L639.28 582.49 L632.11 594.06 L629.64 597.97M733.5 395 L724.3 437.31 L715.18 477.9 L706.31 515.13 L698 547.55 L690.72 573.97 L684.98 593.47 L681.31 605.41 L680.04 609.44M733.5 395 L733.5 438.28 L733.5 479.73 L733.5 517.65 L733.5 550.56 L733.5 577.29 L733.5 596.95 L733.5 608.96 L733.5 613M733.5 395 L742.7 437.31 L751.82 477.9 L760.69 515.13 L769 547.55 L776.28 573.97 L782.02 593.47 L785.69 605.41 L786.96 609.44M733.5 395 L751.37 434.5 L769.08 472.51 L786.3 507.6 L802.42 538.4 L816.57 563.69 L827.72 582.49 L834.89 594.06 L837.36 597.97M733.5 395 L759.09 430.07 L784.45 463.96 L809.14 495.44 L832.29 523.3 L852.65 546.36 L868.73 563.61 L879.08 574.28 L882.66 577.89M733.5 395 L765.53 424.36 L797.19 452.82 L827.86 479.39 L856.47 503.05 L881.48 522.77 L901.15 537.59 L913.76 546.79 L918.12 549.91M733.5 395 L770.55 417.72 L807.01 439.78 L842.05 460.46 L874.43 478.98 L902.47 494.48 L924.33 506.21 L938.28 513.52 L943.08 516M733.5 395 L774.1 410.46 L813.86 425.54 L851.72 439.79 L886.32 452.68 L915.96 463.62 L938.84 471.99 L953.33 477.25 L958.3 479.05M733.5 395 L776.17 402.81 L817.59 410.42 L856.41 417.58 L891.18 424.04 L920.39 429.5 L942.55 433.67 L956.4 436.29 L961.12 437.19" stroke="#161616" stroke-width="1.15" fill="none" stroke-linejoin="round"/><circle cx="733.5" cy="395.0" r="3.2" fill="#161616"/><line x1="514" y1="395.2" x2="951" y2="395.2" stroke="#9b93e8" stroke-width="1.2"/><line x1="514" y1="394.2" x2="951" y2="394.2" stroke="#f39a1f" stroke-width="1.4"/><path d="M614 157 L598.5 179.5 L867 179.5 L852 157" stroke="#f39a1f" stroke-width="1.3" fill="none"/><path d="M476 263 L514 395" stroke="#f39a1f" stroke-width="1.3" fill="none"/><path d="M514 395 L476 526" stroke="#8e8ef2" stroke-width="1.3" fill="none"/><line x1="733.5" y1="140" x2="733.5" y2="179" stroke="#2a7de0" stroke-width="1.4"/><path d="M728.5 146 L733.5 138.5 L738.5 146" stroke="#2a7de0" stroke-width="1.3" fill="none"/><line x1="733.5" y1="180" x2="733.5" y2="232" stroke="#2fdc68" stroke-width="1.4"/><path d="M731.2 227 L733.5 236 L735.8 227 Z" stroke="none" stroke-width="0" fill="#2fdc68"/><path d="M781 178 L790 179.6 L781 181.6 Z" stroke="none" stroke-width="0" fill="#e8452f"/><path d="M754 213.4 L768.5 213.4 L768.5 200.5 L762 213" stroke="#2a7de0" stroke-width="1.3" fill="none"/><circle cx="933.6" cy="395" r="6" fill="#fbe565"/><rect x="479" y="140" width="29.5" height="18.5" fill="#202020" rx="3" fill-opacity="0.5"/><text x="482" y="154.5" font-size="13.5" fill="#e4e4e4" stroke="#e4e4e4" stroke-width="0.2" textLength="22" lengthAdjust="spacingAndGlyphs">Top</text><rect x="867.8" y="539.6" width="153" height="17.2" fill="#202020" rx="3" fill-opacity="0.5"/><text x="870.3" y="552.8" font-size="13.5" fill="#e4e4e4" stroke="#e4e4e4" stroke-width="0.2" textLength="120.2" lengthAdjust="spacingAndGlyphs">Grid Spacing : 5 cm</text></svg>
<div style="position:absolute;left:0px;top:590px;width:473px;height:423px;background:#333333"></div><svg style="position:absolute;left:0px;top:590px" width="473" height="423" viewBox="0 590 473 423" font-family='"Liberation Sans", sans-serif'><defs><radialGradient id="rtg" gradientUnits="userSpaceOnUse" cx="250" cy="850" r="190"><stop offset="0" stop-color="#d5d5d5"/><stop offset="0.21" stop-color="#cbcbcb"/><stop offset="0.34" stop-color="#bcbcbc"/><stop offset="0.53" stop-color="#929292"/><stop offset="0.79" stop-color="#606060"/><stop offset="1" stop-color="#484848"/></radialGradient><radialGradient id="rtr" gradientUnits="userSpaceOnUse" cx="288" cy="888" r="142" gradientTransform="translate(0 888) scale(1 1.12) translate(0 -888)"><stop offset="0.7" stop-color="#000" stop-opacity="0"/><stop offset="1" stop-color="#000" stop-opacity="0.25"/></radialGradient><radialGradient id="rth" gradientUnits="userSpaceOnUse" cx="338" cy="872" r="70"><stop offset="0" stop-color="#fff" stop-opacity="0.3"/><stop offset="1" stop-color="#fff" stop-opacity="0"/></radialGradient><linearGradient id="rts" gradientUnits="userSpaceOnUse" x1="290" y1="0" x2="318" y2="0"><stop offset="0" stop-color="#000" stop-opacity="0"/><stop offset="0.25" stop-color="#000" stop-opacity="0.16"/><stop offset="1" stop-color="#000" stop-opacity="0"/></linearGradient></defs><path d="M13.5 590V1013M34.5 590V1013M56.5 590V1013M100.5 590V1013M122.5 590V1013M143.5 590V1013M165.5 590V1013M187.5 590V1013M208.5 590V1013M230.5 590V1013M252.5 590V1013M274.5 590V1013M317.5 590V1013M339.5 590V1013M361.5 590V1013M382.5 590V1013M404.5 590V1013M426.5 590V1013M448.5 590V1013M470.5 590V1013M0 603.5H473M0 625.5H473M0 647.5H473M0 690.5H473M0 712.5H473M0 734.5H473M0 756.5H473M0 777.5H473M0 799.5H473M0 821.5H473M0 842.5H473M0 864.5H473M0 908.5H473M0 930.5H473M0 951.5H473M0 973.5H473M0 995.5H473" stroke="#3c3c3c" stroke-width="1" fill="none"/><path d="M78.5 590V1013M296.5 590V1013M0 668.5H473M0 886.5H473" stroke="#484848" stroke-width="1" fill="none"/><path d="M295.5 759.6 L265.5 762.4 L246.5 768.4 L228.5 779.6 L208.7 797.8 L191.8 822.9 L180.7 850.8 L173.3 881 L170.3 912.5 L173.1 944.2 L181.9 971.4 L191.7 994.2 L205.5 1013.7 L223.5 1024 L245.5 1030 L269.5 1033 L295.5 1034 L321.5 1033 L345.5 1030 L367.5 1024 L385.5 1013.7 L399.3 994.2 L409.1 971.4 L417.9 944.2 L420.7 912.5 L417.7 881 L410.3 850.8 L399.2 822.9 L382.3 797.8 L362.5 779.6 L344.5 768.4 L325.5 762.4 Z" fill="url(#rtg)"/><path d="M295.5 759.6 L265.5 762.4 L246.5 768.4 L228.5 779.6 L208.7 797.8 L191.8 822.9 L180.7 850.8 L173.3 881 L170.3 912.5 L173.1 944.2 L181.9 971.4 L191.7 994.2 L205.5 1013.7 L223.5 1024 L245.5 1030 L269.5 1033 L295.5 1034 L321.5 1033 L345.5 1030 L367.5 1024 L385.5 1013.7 L399.3 994.2 L409.1 971.4 L417.9 944.2 L420.7 912.5 L417.7 881 L410.3 850.8 L399.2 822.9 L382.3 797.8 L362.5 779.6 L344.5 768.4 L325.5 762.4 Z" fill="url(#rtr)"/><path d="M295.5 759.6 L265.5 762.4 L246.5 768.4 L228.5 779.6 L208.7 797.8 L191.8 822.9 L180.7 850.8 L173.3 881 L170.3 912.5 L173.1 944.2 L181.9 971.4 L191.7 994.2 L205.5 1013.7 L223.5 1024 L245.5 1030 L269.5 1033 L295.5 1034 L321.5 1033 L345.5 1030 L367.5 1024 L385.5 1013.7 L399.3 994.2 L409.1 971.4 L417.9 944.2 L420.7 912.5 L417.7 881 L410.3 850.8 L399.2 822.9 L382.3 797.8 L362.5 779.6 L344.5 768.4 L325.5 762.4 Z" fill="url(#rth)"/><path d="M295.5 759.6 L265.5 762.4 L246.5 768.4 L228.5 779.6 L208.7 797.8 L191.8 822.9 L180.7 850.8 L173.3 881 L170.3 912.5 L173.1 944.2 L181.9 971.4 L191.7 994.2 L205.5 1013.7 L223.5 1024 L245.5 1030 L269.5 1033 L295.5 1034 L321.5 1033 L345.5 1030 L367.5 1024 L385.5 1013.7 L399.3 994.2 L409.1 971.4 L417.9 944.2 L420.7 912.5 L417.7 881 L410.3 850.8 L399.2 822.9 L382.3 797.8 L362.5 779.6 L344.5 768.4 L325.5 762.4 Z" fill="url(#rts)"/><path d="M265.5 762.4 L265.86 762.35 L267.15 762.18 L270.15 761.8 L273.9 761.39 L278.4 760.98 L283.8 760.62 L289.65 760.38 L295.5 760.3 L301.35 760.38 L307.2 760.62 L312.6 760.98 L317.1 761.39 L320.85 761.8 L323.85 762.18 L325.14 762.35 L325.5 762.4M246.5 768.4 L247.09 768.36 L249.19 768.21 L254.09 767.89 L260.22 767.53 L267.57 767.18 L276.39 766.87 L285.94 766.67 L295.5 766.6 L305.06 766.67 L314.61 766.87 L323.43 767.18 L330.78 767.53 L336.9 767.89 L341.81 768.21 L343.91 768.36 L344.5 768.4M228.5 779.6 L229.3 779.61 L232.19 779.66 L238.88 779.77 L247.26 779.89 L257.31 780.02 L269.37 780.14 L282.44 780.24 L295.5 780.3 L308.56 780.24 L321.63 780.14 L333.69 780.02 L343.74 779.89 L352.12 779.77 L358.81 779.66 L361.7 779.61 L362.5 779.6M208.7 797.8 L209.74 797.79 L213.47 797.75 L222.15 797.66 L233 797.55 L246.02 797.43 L261.65 797.31 L278.57 797.2 L295.5 797.1 L312.43 797.2 L329.35 797.31 L344.98 797.43 L358 797.55 L368.85 797.66 L377.53 797.75 L381.26 797.79 L382.3 797.8M191.8 822.9 L193.04 822.8 L197.5 822.43 L207.87 821.58 L220.84 820.53 L236.39 819.29 L255.06 817.84 L275.28 816.3 L295.5 814.8 L315.72 816.3 L335.94 817.84 L354.61 819.29 L370.16 820.53 L383.13 821.58 L393.5 822.43 L397.96 822.8 L399.2 822.9M180.7 850.8 L182.08 850.67 L187.01 850.22 L198.49 849.1 L212.84 847.61 L230.06 845.67 L250.73 843.15 L273.11 840.16 L295.5 836.9 L317.89 840.16 L340.27 843.15 L360.94 845.67 L378.16 847.61 L392.51 849.1 L403.99 850.22 L408.92 850.67 L410.3 850.8M173.3 881 L174.77 880.81 L180.02 880.11 L192.24 878.4 L207.52 876.11 L225.85 873.15 L247.84 869.27 L271.67 864.69 L295.5 859.7 L319.33 864.69 L343.16 869.27 L365.15 873.15 L383.48 876.11 L398.76 878.4 L410.98 880.11 L416.23 880.81 L417.7 881M170.3 912.5 L171.8 912.26 L177.19 911.37 L189.71 909.21 L205.36 906.32 L224.14 902.58 L246.67 897.69 L271.09 891.9 L295.5 885.6 L319.91 891.9 L344.33 897.69 L366.86 902.58 L385.64 906.32 L401.29 909.21 L413.81 911.37 L419.2 912.26 L420.7 912.5M173.1 944.2 L174.57 943.89 L179.83 942.78 L192.07 940.06 L207.37 936.42 L225.73 931.7 L247.76 925.54 L271.63 918.24 L295.5 910.3 L319.37 918.24 L343.24 925.54 L365.27 931.7 L383.63 936.42 L398.93 940.06 L411.17 942.78 L416.43 943.89 L417.9 944.2M181.9 971.4 L183.26 971.07 L188.15 969.89 L199.51 967 L213.71 963.13 L230.75 958.13 L251.2 951.58 L273.35 943.83 L295.5 935.4 L317.65 943.83 L339.8 951.58 L360.25 958.13 L377.29 963.13 L391.49 967 L402.85 969.89 L407.74 971.07 L409.1 971.4M191.7 994.2 L192.95 993.86 L197.41 992.62 L207.79 989.62 L220.76 985.59 L236.33 980.37 L255.02 973.56 L275.26 965.48 L295.5 956.7 L315.74 965.48 L335.98 973.56 L354.67 980.37 L370.24 985.59 L383.21 989.62 L393.59 992.62 L398.05 993.86 L399.3 994.2M205.5 1013.7 L206.58 1013.38 L210.45 1012.2 L219.45 1009.34 L230.7 1005.5 L244.2 1000.54 L260.4 994.05 L277.95 986.36 L295.5 978 L313.05 986.36 L330.6 994.05 L346.8 1000.54 L360.3 1005.5 L371.55 1009.34 L380.55 1012.2 L384.42 1013.38 L385.5 1013.7M223.5 1024 L224.36 1023.74 L227.46 1022.81 L234.66 1020.54 L243.66 1017.5 L254.46 1013.57 L267.42 1008.42 L281.46 1002.33 L295.5 995.7 L309.54 1002.33 L323.58 1008.42 L336.54 1013.57 L347.34 1017.5 L356.34 1020.54 L363.54 1022.81 L366.64 1023.74 L367.5 1024M245.5 1030 L246.1 1029.8 L248.25 1029.05 L253.25 1027.25 L259.5 1024.83 L267 1021.7 L276 1017.61 L285.75 1012.77 L295.5 1007.5 L305.25 1012.77 L315 1017.61 L324 1021.7 L331.5 1024.83 L337.75 1027.25 L342.75 1029.05 L344.9 1029.8 L345.5 1030M269.5 1033 L269.81 1032.83 L270.93 1032.2 L273.53 1030.68 L276.78 1028.64 L280.68 1025.99 L285.36 1022.54 L290.43 1018.45 L295.5 1014 L300.57 1018.45 L305.64 1022.54 L310.32 1025.99 L314.22 1028.64 L317.47 1030.68 L320.07 1032.2 L321.19 1032.83 L321.5 1033M295.5 759.6 L265.86 762.35 L247.09 768.36 L229.3 779.61 L209.74 797.79 L193.04 822.8 L182.08 850.67 L174.77 880.81 L171.8 912.26 L174.57 943.89 L183.26 971.07 L192.95 993.86 L206.58 1013.38 L224.36 1023.74 L246.1 1029.8 L269.81 1032.83 L295.5 1033.85M295.5 759.6 L267.15 762.18 L249.19 768.21 L232.19 779.66 L213.47 797.75 L197.5 822.43 L187.01 850.22 L180.02 880.11 L177.19 911.37 L179.83 942.78 L188.15 969.89 L197.41 992.62 L210.45 1012.2 L227.46 1022.81 L248.25 1029.05 L270.93 1032.2 L295.5 1033.29M295.5 759.6 L270.15 761.8 L254.09 767.89 L238.88 779.77 L222.15 797.66 L207.87 821.58 L198.49 849.1 L192.24 878.4 L189.71 909.21 L192.07 940.06 L199.51 967 L207.79 989.62 L219.45 1009.34 L234.66 1020.54 L253.25 1027.25 L273.53 1030.68 L295.5 1031.92M295.5 759.6 L273.9 761.39 L260.22 767.53 L247.26 779.89 L233 797.55 L220.84 820.53 L212.84 847.61 L207.52 876.11 L205.36 906.32 L207.37 936.42 L213.71 963.13 L220.76 985.59 L230.7 1005.5 L243.66 1017.5 L259.5 1024.83 L276.78 1028.64 L295.5 1030.1M295.5 759.6 L278.4 760.98 L267.57 767.18 L257.31 780.02 L246.02 797.43 L236.39 819.29 L230.06 845.67 L225.85 873.15 L224.14 902.58 L225.73 931.7 L230.75 958.13 L236.33 980.37 L244.2 1000.54 L254.46 1013.57 L267 1021.7 L280.68 1025.99 L295.5 1027.73M295.5 759.6 L283.8 760.62 L276.39 766.87 L269.37 780.14 L261.65 797.31 L255.06 817.84 L250.73 843.15 L247.84 869.27 L246.67 897.69 L247.76 925.54 L251.2 951.58 L255.02 973.56 L260.4 994.05 L267.42 1008.42 L276 1017.61 L285.36 1022.54 L295.5 1024.64M295.5 759.6 L289.65 760.38 L285.94 766.67 L282.44 780.24 L278.57 797.2 L275.28 816.3 L273.11 840.16 L271.67 864.69 L271.09 891.9 L271.63 918.24 L273.35 943.83 L275.26 965.48 L277.95 986.36 L281.46 1002.33 L285.75 1012.77 L290.43 1018.45 L295.5 1020.98M295.5 759.6 L295.5 760.3 L295.5 766.6 L295.5 780.3 L295.5 797.1 L295.5 814.8 L295.5 836.9 L295.5 859.7 L295.5 885.6 L295.5 910.3 L295.5 935.4 L295.5 956.7 L295.5 978 L295.5 995.7 L295.5 1007.5 L295.5 1014 L295.5 1017M295.5 759.6 L301.35 760.38 L305.06 766.67 L308.56 780.24 L312.43 797.2 L315.72 816.3 L317.89 840.16 L319.33 864.69 L319.91 891.9 L319.37 918.24 L317.65 943.83 L315.74 965.48 L313.05 986.36 L309.54 1002.33 L305.25 1012.77 L300.57 1018.45 L295.5 1020.98M295.5 759.6 L307.2 760.62 L314.61 766.87 L321.63 780.14 L329.35 797.31 L335.94 817.84 L340.27 843.15 L343.16 869.27 L344.33 897.69 L343.24 925.54 L339.8 951.58 L335.98 973.56 L330.6 994.05 L323.58 1008.42 L315 1017.61 L305.64 1022.54 L295.5 1024.64M295.5 759.6 L312.6 760.98 L323.43 767.18 L333.69 780.02 L344.98 797.43 L354.61 819.29 L360.94 845.67 L365.15 873.15 L366.86 902.58 L365.27 931.7 L360.25 958.13 L354.67 980.37 L346.8 1000.54 L336.54 1013.57 L324 1021.7 L310.32 1025.99 L295.5 1027.73M295.5 759.6 L317.1 761.39 L330.78 767.53 L343.74 779.89 L358 797.55 L370.16 820.53 L378.16 847.61 L383.48 876.11 L385.64 906.32 L383.63 936.42 L377.29 963.13 L370.24 985.59 L360.3 1005.5 L347.34 1017.5 L331.5 1024.83 L314.22 1028.64 L295.5 1030.1M295.5 759.6 L320.85 761.8 L336.9 767.89 L352.12 779.77 L368.85 797.66 L383.13 821.58 L392.51 849.1 L398.76 878.4 L401.29 909.21 L398.93 940.06 L391.49 967 L383.21 989.62 L371.55 1009.34 L356.34 1020.54 L337.75 1027.25 L317.47 1030.68 L295.5 1031.92M295.5 759.6 L323.85 762.18 L341.81 768.21 L358.81 779.66 L377.53 797.75 L393.5 822.43 L403.99 850.22 L410.98 880.11 L413.81 911.37 L411.17 942.78 L402.85 969.89 L393.59 992.62 L380.55 1012.2 L363.54 1022.81 L342.75 1029.05 L320.07 1032.2 L295.5 1033.29M295.5 759.6 L325.14 762.35 L343.91 768.36 L361.7 779.61 L381.26 797.79 L397.96 822.8 L408.92 850.67 L416.23 880.81 L419.2 912.26 L416.43 943.89 L407.74 971.07 L398.05 993.86 L384.42 1013.38 L366.64 1023.74 L344.9 1029.8 L321.19 1032.83 L295.5 1033.85" stroke="#161616" stroke-width="1.15" fill="none" stroke-linejoin="round"/><path d="M295.5 759.6 L265.5 762.4 L246.5 768.4 L228.5 779.6 L208.7 797.8 L191.8 822.9 L180.7 850.8 L173.3 881 L170.3 912.5 L173.1 944.2 L181.9 971.4 L191.7 994.2 L205.5 1013.7 L223.5 1024 L245.5 1030 L269.5 1033 L295.5 1034 L321.5 1033 L345.5 1030 L367.5 1024 L385.5 1013.7 L399.3 994.2 L409.1 971.4 L417.9 944.2 L420.7 912.5 L417.7 881 L410.3 850.8 L399.2 822.9 L382.3 797.8 L362.5 779.6 L344.5 768.4 L325.5 762.4 Z" stroke="#161616" stroke-width="1.4" fill="none" stroke-linejoin="round"/><path d="M47.6 886 L47.6 680.6 L169 653.6 L175.6 653.6 L296 680.8" stroke="#8e8ef2" stroke-width="1.3" fill="none"/><path d="M47.6 886 L165.9 912 L177.5 912 L182 911" stroke="#8e8ef2" stroke-width="1.3" fill="none"/><path d="M182 911 L296 886" stroke="#7f7fe0" stroke-width="1.1" fill="none" stroke-dasharray="2 1.2" opacity="0.8"/><path d="M183.8 728.8 L171.8 720.4 L171.8 845.6 L183.9 837" stroke="#8e8ef2" stroke-width="1.3" fill="none"/><path d="M296 680.8 L416.6 654 L424.2 654 L473 663.2" stroke="#f39a1f" stroke-width="1.3" fill="none"/><path d="M296 886 L413.5 912 L426.4 912 L473 902.4" stroke="#f39a1f" stroke-width="1.4" fill="none"/><path d="M432.6 729 L420.3 720.4 L420.3 845.6 L432.6 837" stroke="#f39a1f" stroke-width="1.4" fill="none"/><circle cx="296" cy="783" r="6" fill="#fbe565"/><line x1="297.2" y1="681" x2="297.2" y2="886" stroke="#b9a6e8" stroke-width="1"/><line x1="295.9" y1="681" x2="295.9" y2="886" stroke="#f39a1f" stroke-width="1.5"/><line x1="296" y1="591" x2="296" y2="681" stroke="#25d36a" stroke-width="1.5"/><path d="M290.8 598.4 L296 590.8 L301.2 598.4" stroke="#25d36a" stroke-width="1.4" fill="none"/><line x1="422" y1="885.8" x2="470" y2="885.8" stroke="#1f6fd6" stroke-width="1.7"/><path d="M462.6 880.4 L470.4 885.8 L462.6 891.2" stroke="#1f6fd6" stroke-width="1.5" fill="none"/><line x1="366" y1="783.2" x2="420" y2="783.2" stroke="#25d36a" stroke-width="1.6"/><path d="M371 780.8 L362.6 783.2 L371 785.6 Z" stroke="none" stroke-width="0" fill="#25d36a"/><circle cx="420.3" cy="783.2" r="1.6" fill="#f03a4a"/><path d="M385.8 762 L385.8 748.2 L399.8 748.2" stroke="#e8364a" stroke-width="1.6" fill="none"/><path d="M386 757 L396 748.4" stroke="#e8364a" stroke-width="0.9" fill="none"/><path d="M418.4 734.6 L420.3 728.6 L422.2 734.6 Z" stroke="none" stroke-width="0" fill="#2b7fe6"/><line x1="431.3" y1="609.8" x2="431.3" y2="630.8" stroke="#22dd5c" stroke-width="1.6"/><line x1="431.3" y1="630.8" x2="452.3" y2="630.8" stroke="#2186ee" stroke-width="1.6"/><text x="431.3" y="604.2" font-size="12.6" fill="#22dd5c" stroke="#22dd5c" stroke-width="0.6" text-anchor="middle">Y</text><text x="462.1" y="635.8" font-size="12.6" fill="#2186ee" stroke="#2186ee" stroke-width="0.6" text-anchor="middle">Z</text><text x="431.4" y="636" font-size="12.6" fill="#f2333f" stroke="#f2333f" stroke-width="0.6" text-anchor="middle">X</text><rect x="314.4" y="991" width="153.2" height="17.4" fill="#202020" rx="3" fill-opacity="0.5"/><text x="317" y="1003.9" font-size="13.5" fill="#e4e4e4" stroke="#e4e4e4" stroke-width="0.2" textLength="120.2" lengthAdjust="spacingAndGlyphs">Grid Spacing : 5 cm</text></svg>
<div style="position:absolute;left:475px;top:590px;width:476px;height:423px;background:#333333"></div><svg style="position:absolute;left:475px;top:590px" width="476" height="423" viewBox="475 590 476 423" font-family='"Liberation Sans", sans-serif'><defs><radialGradient id="frg" gradientUnits="userSpaceOnUse" cx="702" cy="768" r="172"><stop offset="0" stop-color="#d8d8d8"/><stop offset="0.2" stop-color="#cecece"/><stop offset="0.4" stop-color="#b8b8b8"/><stop offset="0.6" stop-color="#989898"/><stop offset="0.75" stop-color="#787878"/><stop offset="0.9" stop-color="#565656"/><stop offset="1" stop-color="#464646"/></radialGradient><radialGradient id="frr" gradientUnits="userSpaceOnUse" cx="738" cy="784" r="142"><stop offset="0.62" stop-color="#000" stop-opacity="0"/><stop offset="1" stop-color="#000" stop-opacity="0.36"/></radialGradient></defs><path d="M489.5 590V1013M509.5 590V1013M529.5 590V1013M569.5 590V1013M589.5 590V1013M609.5 590V1013M628.5 590V1013M648.5 590V1013M668.5 590V1013M688.5 590V1013M708.5 590V1013M728.5 590V1013M767.5 590V1013M787.5 590V1013M807.5 590V1013M827.5 590V1013M847.5 590V1013M867.5 590V1013M886.5 590V1013M906.5 590V1013M926.5 590V1013M475 614.5H951M475 634.5H951M475 654.5H951M475 674.5H951M475 694.5H951M475 714.5H951M475 733.5H951M475 753.5H951M475 773.5H951M475 813.5H951M475 833.5H951M475 853.5H951M475 872.5H951M475 892.5H951M475 912.5H951M475 932.5H951M475 952.5H951M475 972.5H951M475 1011.5H951" stroke="#3c3c3c" stroke-width="1" fill="none"/><path d="M549.5 590V1013M748.5 590V1013M946.5 590V1013M475 594.5H951M475 793.5H951M475 992.5H951" stroke="#484848" stroke-width="1" fill="none"/><line x1="864" y1="793.2" x2="951" y2="793.2" stroke="#c4384c" stroke-width="1.6"/><path d="M747.5 678.3 L720.9 681.6 L703.8 687.3 L683.9 697.9 L666.2 712.8 L650.5 731.8 L638.7 753.9 L631.5 778.5 L629.3 804.3 L632.7 829.2 L642.2 853.6 L657 877.2 L679.1 897.8 L708.5 913.2 L727.5 920.1 L747.5 921.8 L767.5 920.1 L786.5 913.2 L815.9 897.8 L838 877.2 L852.8 853.6 L862.3 829.2 L865.7 804.3 L863.5 778.5 L856.3 753.9 L844.5 731.8 L828.8 712.8 L811.1 697.9 L791.2 687.3 L774.1 681.6 Z" fill="url(#frg)"/><path d="M747.5 678.3 L720.9 681.6 L703.8 687.3 L683.9 697.9 L666.2 712.8 L650.5 731.8 L638.7 753.9 L631.5 778.5 L629.3 804.3 L632.7 829.2 L642.2 853.6 L657 877.2 L679.1 897.8 L708.5 913.2 L727.5 920.1 L747.5 921.8 L767.5 920.1 L786.5 913.2 L815.9 897.8 L838 877.2 L852.8 853.6 L862.3 829.2 L865.7 804.3 L863.5 778.5 L856.3 753.9 L844.5 731.8 L828.8 712.8 L811.1 697.9 L791.2 687.3 L774.1 681.6 Z" fill="url(#frr)"/><path d="M720.9 681.6 L721.03 681.58 L721.57 681.51 L722.97 681.33 L725.95 680.98 L730.26 680.56 L735.45 680.17 L741.38 679.9 L747.5 679.8 L753.62 679.9 L759.55 680.17 L764.74 680.56 L769.05 680.98 L772.03 681.33 L773.43 681.51 L773.97 681.58 L774.1 681.6M703.8 687.3 L704.02 687.28 L704.89 687.19 L707.21 686.96 L712.1 686.51 L719.18 685.97 L727.7 685.47 L737.45 685.12 L747.5 685 L757.55 685.12 L767.3 685.47 L775.82 685.97 L782.9 686.51 L787.79 686.96 L790.11 687.19 L790.98 687.28 L791.2 687.3M683.9 697.9 L684.22 697.89 L685.49 697.87 L688.86 697.8 L695.98 697.66 L706.29 697.49 L718.69 697.34 L732.87 697.24 L747.5 697.2 L762.13 697.24 L776.31 697.34 L788.71 697.49 L799.02 697.66 L806.14 697.8 L809.51 697.87 L810.78 697.89 L811.1 697.9M666.2 712.8 L666.61 712.81 L668.23 712.86 L672.54 712.98 L681.65 713.21 L694.82 713.5 L710.67 713.75 L728.8 713.94 L747.5 714 L766.2 713.94 L784.33 713.75 L800.18 713.5 L813.35 713.21 L822.46 712.98 L826.77 712.86 L828.39 712.81 L828.8 712.8M650.5 731.8 L650.99 731.84 L652.92 732 L658.07 732.4 L668.93 733.18 L684.64 734.12 L703.56 734.98 L725.19 735.59 L747.5 735.8 L769.81 735.59 L791.44 734.98 L810.36 734.12 L826.07 733.18 L836.93 732.4 L842.08 732 L844.01 731.84 L844.5 731.8M638.7 753.9 L639.24 753.97 L641.42 754.27 L647.19 755.02 L659.37 756.48 L677 758.25 L698.21 759.86 L722.48 761 L747.5 761.4 L772.52 761 L796.79 759.86 L818 758.25 L835.63 756.48 L847.81 755.02 L853.58 754.27 L855.76 753.97 L856.3 753.9M631.5 778.5 L632.08 778.6 L634.4 779.02 L640.55 780.07 L653.54 782.11 L672.33 784.59 L694.95 786.85 L720.82 788.44 L747.5 789 L774.18 788.44 L800.05 786.85 L822.67 784.59 L841.46 782.11 L854.45 780.07 L860.6 779.02 L862.92 778.6 L863.5 778.5M629.3 804.3 L629.89 804.42 L632.25 804.92 L638.52 806.17 L651.76 808.6 L670.91 811.55 L693.96 814.23 L720.31 816.14 L747.5 816.8 L774.69 816.14 L801.04 814.23 L824.09 811.55 L843.24 808.6 L856.48 806.17 L862.75 804.92 L865.11 804.42 L865.7 804.3M632.7 829.2 L633.27 829.37 L635.57 830.04 L641.65 831.75 L654.51 835.05 L673.11 839.06 L695.5 842.71 L721.1 845.3 L747.5 846.2 L773.9 845.3 L799.5 842.71 L821.89 839.06 L840.49 835.05 L853.35 831.75 L859.43 830.04 L861.73 829.37 L862.3 829.2M642.2 853.6 L642.73 853.78 L644.83 854.51 L650.41 856.36 L662.21 859.93 L679.27 864.27 L699.8 868.22 L723.28 871.03 L747.5 872 L771.72 871.03 L795.2 868.22 L815.73 864.27 L832.79 859.93 L844.59 856.36 L850.17 854.51 L852.27 853.78 L852.8 853.6M657 877.2 L657.45 877.36 L659.26 878 L664.06 879.63 L674.19 882.77 L688.86 886.6 L706.5 890.08 L726.68 892.54 L747.5 893.4 L768.32 892.54 L788.5 890.08 L806.14 886.6 L820.81 882.77 L830.94 879.63 L835.74 878 L837.55 877.36 L838 877.2M679.1 897.8 L679.44 897.92 L680.81 898.38 L684.44 899.55 L692.1 901.82 L703.18 904.59 L716.51 907.1 L731.77 908.88 L747.5 909.5 L763.23 908.88 L778.49 907.1 L791.82 904.59 L802.9 901.82 L810.56 899.55 L814.19 898.38 L815.56 897.92 L815.9 897.8M708.5 913.2 L708.7 913.26 L709.48 913.49 L711.54 914.07 L715.91 915.19 L722.23 916.56 L729.83 917.81 L738.53 918.69 L747.5 919 L756.47 918.69 L765.17 917.81 L772.77 916.56 L779.09 915.19 L783.46 914.07 L785.52 913.49 L786.3 913.26 L786.5 913.2M727.5 920.1 L727.6 920.11 L728 920.16 L729.06 920.28 L731.3 920.51 L734.54 920.8 L738.44 921.05 L742.9 921.24 L747.5 921.3 L752.1 921.24 L756.56 921.05 L760.46 920.8 L763.7 920.51 L765.94 920.28 L767 920.16 L767.4 920.11 L767.5 920.1M747.5 678.3 L721.03 681.58 L704.02 687.28 L684.22 697.89 L666.61 712.81 L650.99 731.84 L639.24 753.97 L632.08 778.6 L629.89 804.42 L633.27 829.37 L642.73 853.78 L657.45 877.36 L679.44 897.92 L708.7 913.26 L727.6 920.11 L747.5 921.8M747.5 678.3 L721.57 681.51 L704.89 687.19 L685.49 697.87 L668.23 712.86 L652.92 732 L641.42 754.27 L634.4 779.02 L632.25 804.92 L635.57 830.04 L644.83 854.51 L659.26 878 L680.81 898.38 L709.48 913.49 L728 920.16 L747.5 921.8M747.5 678.3 L722.97 681.33 L707.21 686.96 L688.86 697.8 L672.54 712.98 L658.07 732.4 L647.19 755.02 L640.55 780.07 L638.52 806.17 L641.65 831.75 L650.41 856.36 L664.06 879.63 L684.44 899.55 L711.54 914.07 L729.06 920.28 L747.5 921.8M747.5 678.3 L725.95 680.98 L712.1 686.51 L695.98 697.66 L681.65 713.21 L668.93 733.18 L659.37 756.48 L653.54 782.11 L651.76 808.6 L654.51 835.05 L662.21 859.93 L674.19 882.77 L692.1 901.82 L715.91 915.19 L731.3 920.51 L747.5 921.8M747.5 678.3 L730.26 680.56 L719.18 685.97 L706.29 697.49 L694.82 713.5 L684.64 734.12 L677 758.25 L672.33 784.59 L670.91 811.55 L673.11 839.06 L679.27 864.27 L688.86 886.6 L703.18 904.59 L722.23 916.56 L734.54 920.8 L747.5 921.8M747.5 678.3 L735.45 680.17 L727.7 685.47 L718.69 697.34 L710.67 713.75 L703.56 734.98 L698.21 759.86 L694.95 786.85 L693.96 814.23 L695.5 842.71 L699.8 868.22 L706.5 890.08 L716.51 907.1 L729.83 917.81 L738.44 921.05 L747.5 921.8M747.5 678.3 L741.38 679.9 L737.45 685.12 L732.87 697.24 L728.8 713.94 L725.19 735.59 L722.48 761 L720.82 788.44 L720.31 816.14 L721.1 845.3 L723.28 871.03 L726.68 892.54 L731.77 908.88 L738.53 918.69 L742.9 921.24 L747.5 921.8M747.5 678.3 L747.5 679.8 L747.5 685 L747.5 697.2 L747.5 714 L747.5 735.8 L747.5 761.4 L747.5 789 L747.5 816.8 L747.5 846.2 L747.5 872 L747.5 893.4 L747.5 909.5 L747.5 919 L747.5 921.3 L747.5 921.8M747.5 678.3 L753.62 679.9 L757.55 685.12 L762.13 697.24 L766.2 713.94 L769.81 735.59 L772.52 761 L774.18 788.44 L774.69 816.14 L773.9 845.3 L771.72 871.03 L768.32 892.54 L763.23 908.88 L756.47 918.69 L752.1 921.24 L747.5 921.8M747.5 678.3 L759.55 680.17 L767.3 685.47 L776.31 697.34 L784.33 713.75 L791.44 734.98 L796.79 759.86 L800.05 786.85 L801.04 814.23 L799.5 842.71 L795.2 868.22 L788.5 890.08 L778.49 907.1 L765.17 917.81 L756.56 921.05 L747.5 921.8M747.5 678.3 L764.74 680.56 L775.82 685.97 L788.71 697.49 L800.18 713.5 L810.36 734.12 L818 758.25 L822.67 784.59 L824.09 811.55 L821.89 839.06 L815.73 864.27 L806.14 886.6 L791.82 904.59 L772.77 916.56 L760.46 920.8 L747.5 921.8M747.5 678.3 L769.05 680.98 L782.9 686.51 L799.02 697.66 L813.35 713.21 L826.07 733.18 L835.63 756.48 L841.46 782.11 L843.24 808.6 L840.49 835.05 L832.79 859.93 L820.81 882.77 L802.9 901.82 L779.09 915.19 L763.7 920.51 L747.5 921.8M747.5 678.3 L772.03 681.33 L787.79 686.96 L806.14 697.8 L822.46 712.98 L836.93 732.4 L847.81 755.02 L854.45 780.07 L856.48 806.17 L853.35 831.75 L844.59 856.36 L830.94 879.63 L810.56 899.55 L783.46 914.07 L765.94 920.28 L747.5 921.8M747.5 678.3 L773.43 681.51 L790.11 687.19 L809.51 697.87 L826.77 712.86 L842.08 732 L853.58 754.27 L860.6 779.02 L862.75 804.92 L859.43 830.04 L850.17 854.51 L835.74 878 L814.19 898.38 L785.52 913.49 L767 920.16 L747.5 921.8M747.5 678.3 L773.97 681.58 L790.98 687.28 L810.78 697.89 L828.39 712.81 L844.01 731.84 L855.76 753.97 L862.92 778.6 L865.11 804.42 L861.73 829.37 L852.27 853.78 L837.55 877.36 L815.56 897.92 L786.3 913.26 L767.4 920.11 L747.5 921.8" stroke="#161616" stroke-width="1.15" fill="none" stroke-linejoin="round"/><path d="M747.5 678.3 L720.9 681.6 L703.8 687.3 L683.9 697.9 L666.2 712.8 L650.5 731.8 L638.7 753.9 L631.5 778.5 L629.3 804.3 L632.7 829.2 L642.2 853.6 L657 877.2 L679.1 897.8 L708.5 913.2 L727.5 920.1 L747.5 921.8 L767.5 920.1 L786.5 913.2 L815.9 897.8 L838 877.2 L852.8 853.6 L862.3 829.2 L865.7 804.3 L863.5 778.5 L856.3 753.9 L844.5 731.8 L828.8 712.8 L811.1 697.9 L791.2 687.3 L774.1 681.6 Z" stroke="#161616" stroke-width="1.4" fill="none" stroke-linejoin="round"/><path d="M632 793.2 L632 606.2 L862 606.2 L862 793.2" stroke="#f39a1f" stroke-width="1.4" fill="none"/><line x1="632" y1="793.2" x2="862" y2="793.2" stroke="#f39a1f" stroke-width="1.7"/><line x1="632" y1="606.2" x2="611.5" y2="590" stroke="#f39a1f" stroke-width="1.3"/><line x1="862" y1="606.2" x2="882.5" y2="590" stroke="#f39a1f" stroke-width="1.3"/><line x1="632" y1="793.2" x2="602.5" y2="817" stroke="#f39a1f" stroke-width="1.3"/><line x1="862" y1="793.2" x2="892" y2="817" stroke="#f39a1f" stroke-width="1.3"/><line x1="747.4" y1="699.2" x2="818.5" y2="643" stroke="#f39a1f" stroke-width="1.3"/><path d="M802.5 643 L818.5 643 L818.5 658.5" stroke="#f39a1f" stroke-width="1.4" fill="none"/><line x1="747.4" y1="699.2" x2="677.6" y2="642.4" stroke="#f39a1f" stroke-width="1.3"/><path d="M693.6 642.4 L677.6 642.4 L677.6 657.9" stroke="#f39a1f" stroke-width="1.4" fill="none"/><line x1="747.4" y1="699.2" x2="818.5" y2="756.4" stroke="#f39a1f" stroke-width="1.3"/><path d="M802.5 756.4 L818.5 756.4 L818.5 740.9" stroke="#f39a1f" stroke-width="1.4" fill="none"/><line x1="747.4" y1="699.2" x2="677.6" y2="756.4" stroke="#f39a1f" stroke-width="1.3"/><path d="M693.6 756.4 L677.6 756.4 L677.6 740.9" stroke="#f39a1f" stroke-width="1.4" fill="none"/><line x1="747.5" y1="591" x2="747.5" y2="645" stroke="#25d36a" stroke-width="1.5"/><path d="M742.3 598 L747.5 590.6 L752.7 598" stroke="#25d36a" stroke-width="1.4" fill="none"/><line x1="747.5" y1="646" x2="747.5" y2="699" stroke="#2b7fe6" stroke-width="1.6"/><path d="M745 652 L747.5 643.5 L750 652 Z" stroke="none" stroke-width="0" fill="#2b7fe6"/><line x1="747.5" y1="699.3" x2="800" y2="699.3" stroke="#f03a4a" stroke-width="1.7"/><path d="M795 697 L803.5 699.3 L795 701.6 Z" stroke="none" stroke-width="0" fill="#f03a4a"/><line x1="803" y1="699.3" x2="848" y2="699.3" stroke="#f6e468" stroke-width="1.5"/><circle cx="852.3" cy="699.4" r="6" fill="#fbe565"/><path d="M768.3 665.4 L782.2 665.4 L782.2 678.8" stroke="#25d36a" stroke-width="1.7" fill="none"/><path d="M775.5 665.6 L782 665.6 L782 672 Z" stroke="none" stroke-width="0" fill="#25d36a"/><rect x="479" y="593.6" width="38.5" height="17.5" fill="#202020" rx="3" fill-opacity="0.5"/><text x="481.6" y="607.2" font-size="13.5" fill="#e4e4e4" stroke="#e4e4e4" stroke-width="0.2" textLength="31.2" lengthAdjust="spacingAndGlyphs">Front</text><rect x="885.2" y="992" width="153" height="16.6" fill="#202020" rx="3" fill-opacity="0.5"/><text x="887.5" y="1004" font-size="13.5" fill="#e4e4e4" stroke="#e4e4e4" stroke-width="0.2" textLength="120.2" lengthAdjust="spacingAndGlyphs">Grid Spacing : 5 cm</text></svg>
<div style="position:absolute;left:0;top:1013px;width:951px;height:33px;background:#1b1b1b"></div>
<div style="position:absolute;left:0;top:1013px;width:951px;height:2px;background:#242424"></div>
<div style="position:absolute;left:0;top:1043px;width:951px;height:1px;background:#565656"></div>
<div style="position:absolute;left:0;top:1044px;width:951px;height:1px;background:#0c0c0e"></div>
<div style="position:absolute;left:0;top:1045px;width:951px;height:2px;background:#2a2c3f"></div>
<div style="position:absolute;left:0;top:1047px;width:951px;height:3px;background:#1a1b2c"></div>
<svg style="position:absolute;left:0px;top:1013px" width="951" height="37" viewBox="0 1013 951 37" font-family='"Liberation Sans", sans-serif'><text x="-3" y="1034" font-size="13.5" fill="#bdbdbd" stroke="#bdbdbd" stroke-width="0.3" textLength="753" lengthAdjust="spacingAndGlyphs">and drag to move elements. Hold down SHIFT to quantize movement / add to the selection in point mode, CTRL to remove.</text></svg>
</body></html>
